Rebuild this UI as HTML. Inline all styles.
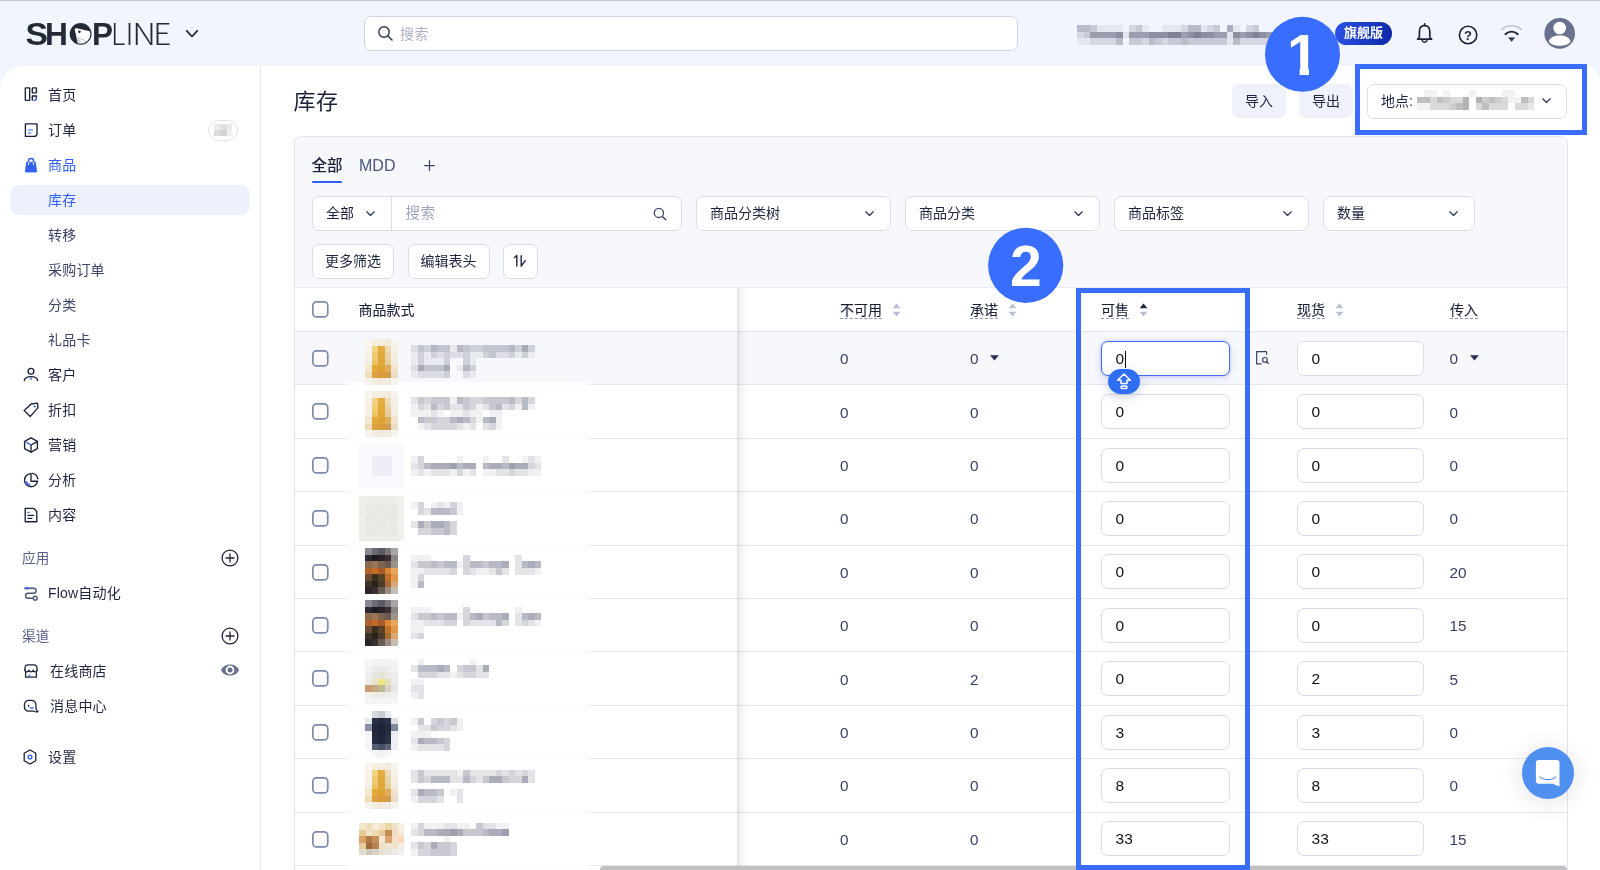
<!DOCTYPE html><html lang="zh-CN"><head><meta charset="utf-8"><title>库存</title><style>
*{box-sizing:border-box;margin:0;padding:0}
html,body{width:1600px;height:870px;overflow:hidden}
body{position:relative;background:#f2f5fe;font-family:"Liberation Sans","Noto Sans CJK SC",sans-serif;font-size:14px;color:#1f2540;-webkit-font-smoothing:antialiased;will-change:transform}
.abs{position:absolute}
#topline{position:absolute;left:0;top:0;width:1600px;height:1px;background:#c6c6ca}
#side{position:absolute;left:0;top:66px;width:261px;height:804px;background:#fff;border-top-left-radius:24px;border-right:1px solid #e4e7f0}
#main{position:absolute;left:261px;top:66px;width:1339px;height:804px;background:#fff;border-top-right-radius:16px}
.nav{position:absolute;left:48px;height:20px;line-height:20px;font-size:14px;color:#1f2540;white-space:nowrap;letter-spacing:0.2px}
.nav.sub{color:#3c4568}
.nav.act{color:#2f5cf5}
.nav.sec{left:22px;color:#56608a;font-size:13.5px}
.ico{position:absolute;left:22px;width:18px;height:18px}
#actbg{position:absolute;left:11px;top:185px;width:238px;height:30px;border-radius:7px;background:#edf1fe}
#card{position:absolute;left:294px;top:136px;width:1274px;height:760px;background:#f7f8fc;border:1px solid #e1e4ef;border-radius:7px}
.sel{position:absolute;height:35px;background:#fff;border:1px solid #d9dcea;border-radius:7px;font-size:14px;line-height:33px;color:#1f2540;white-space:nowrap}
.btn{position:absolute;height:35px;background:#fff;border:1px solid #d9dcea;border-radius:7px;font-size:14px;line-height:32px;color:#1f2540;text-align:center;white-space:nowrap}
.gbtn{position:absolute;height:34px;background:#eff2fb;border-radius:7px;font-size:14px;line-height:34px;color:#1f2540;text-align:center}
.chev{position:absolute;width:10px;height:6px}
#tbl{position:absolute;left:295px;top:288px;width:1272px;height:582px;background:#fff}
.row{position:absolute;left:0;width:1272px;border-top:1px solid #e6e8f1}
.cb{position:absolute;width:18px;height:18px}
.th{position:absolute;font-size:14px;line-height:20px;color:#1a2038;white-space:nowrap;font-weight:400;-webkit-text-stroke:0.1px #1a2038}
.th u{text-decoration:none;border-bottom:1px dashed #9097b6;padding-bottom:0px}
.num{position:absolute;font-size:15.3px;line-height:20px;color:#3a4160;white-space:nowrap}
.inp{position:absolute;height:35px;background:#fff;border:1px solid #d9dcea;border-radius:7px;font-size:15.5px;line-height:34.6px;color:#111;padding-left:13.6px}
.sorta{position:absolute;width:9px;height:14px}
.hl{position:absolute;border:5px solid #386dfe}
.circ{position:absolute;width:75px;height:75px;border-radius:50%;background:#3370ff;color:#fff;font-weight:bold;font-size:50px;line-height:75px;text-align:center}
</style></head><body>
<div id="topline"></div>
<svg class="abs" style="left:0px;top:0px" width="200" height="66" viewBox="0 0 200 66">
<g font-family="Liberation Sans, sans-serif" font-weight="bold" font-size="31.1" fill="#232a36">
<text x="25.5" y="44.9" textLength="22.5" lengthAdjust="spacingAndGlyphs">S</text>
<text x="44.9" y="44.9" textLength="22.9" lengthAdjust="spacingAndGlyphs">H</text>
<text x="92.1" y="44.9" textLength="20.95" lengthAdjust="spacingAndGlyphs">P</text>
</g>
<defs><clipPath id="lc"><circle cx="80.6" cy="33.9" r="9.8"/></clipPath></defs>
<circle cx="80.6" cy="33.9" r="10.9" fill="#232a36"/>
<path d="M74.9 30.2 C74.5 28.7 75.5 27.9 76.8 28.3 L93 32 L93 46 L78.3 46 Z" fill="#fff" clip-path="url(#lc)"/>
<circle cx="79.4" cy="31.7" r="1.25" fill="#232a36"/>
<path d="M77.3 37.4 L85.4 40.7 M77.6 38.5 L82.2 43.3 M77.9 39.7 L79.8 43.8" stroke="#8a9098" stroke-width="0.55" fill="none" clip-path="url(#lc)"/>
<g font-family="Noto Sans CJK SC, Liberation Sans, sans-serif" font-weight="300" font-size="29.4" fill="#232a36">
<text x="110.9" y="44.9" textLength="14.27" lengthAdjust="spacingAndGlyphs">L</text>
<text x="125.6" y="44.9" textLength="8" lengthAdjust="spacingAndGlyphs">I</text>
<text x="132.25" y="44.9" textLength="23.7" lengthAdjust="spacingAndGlyphs">N</text>
<text x="153.3" y="44.9" textLength="18" lengthAdjust="spacingAndGlyphs">E</text>
</g>
</svg>
<svg class="abs" style="left:185.5px;top:29.6px" width="12" height="7.5" viewBox="0 0 12 7.5"><path d="M0.8 0.8 L6.0 6.5 L11.2 0.8" fill="none" stroke="#232a36" stroke-width="1.8" stroke-linecap="round" stroke-linejoin="round"/></svg>
<div class="abs" style="left:364px;top:16px;width:654px;height:35px;background:#fff;border:1px solid #d0d4e6;border-radius:7px"></div>
<svg class="abs" style="left:377px;top:25px" width="17" height="17" viewBox="0 0 17 17"><circle cx="7" cy="7" r="5.2" fill="none" stroke="#2c3142" stroke-width="1.4"/><path d="M11 11 L15 15" stroke="#2c3142" stroke-width="1.5" stroke-linecap="round"/></svg>
<div class="abs" style="left:400px;top:23.6px;font-size:14px;line-height:20px;color:#adb1c6;letter-spacing:0.5px">搜索</div>
<svg class="abs" style="left:1077.2px;top:24.5px" width="196.0" height="20.5" shape-rendering="crispEdges"><rect x="0.0" y="0.0" width="6.7" height="6.7" fill="#b8bbc9"/><rect x="6.5" y="0.0" width="6.7" height="6.7" fill="#b8bbc9"/><rect x="13.0" y="0.0" width="6.7" height="6.7" fill="#c7cad6"/><rect x="19.5" y="0.0" width="6.7" height="6.7" fill="#e4e7f1"/><rect x="26.0" y="0.0" width="6.7" height="6.7" fill="#e4e7f1"/><rect x="32.5" y="0.0" width="6.7" height="6.7" fill="#e4e7f1"/><rect x="39.0" y="0.0" width="6.7" height="6.7" fill="#e4e7f1"/><rect x="52.0" y="0.0" width="6.7" height="6.7" fill="#d5d8e4"/><rect x="58.5" y="0.0" width="6.7" height="6.7" fill="#c7cad6"/><rect x="65.0" y="0.0" width="6.7" height="6.7" fill="#e4e7f1"/><rect x="84.5" y="0.0" width="6.7" height="6.7" fill="#e4e7f1"/><rect x="91.0" y="0.0" width="6.7" height="6.7" fill="#e4e7f1"/><rect x="97.5" y="0.0" width="6.7" height="6.7" fill="#e4e7f1"/><rect x="104.0" y="0.0" width="6.7" height="6.7" fill="#d5d8e4"/><rect x="110.5" y="0.0" width="6.7" height="6.7" fill="#b8bbc9"/><rect x="117.0" y="0.0" width="6.7" height="6.7" fill="#b8bbc9"/><rect x="123.5" y="0.0" width="6.7" height="6.7" fill="#e4e7f1"/><rect x="130.0" y="0.0" width="6.7" height="6.7" fill="#d5d8e4"/><rect x="136.5" y="0.0" width="6.7" height="6.7" fill="#c7cad6"/><rect x="149.5" y="0.0" width="6.7" height="6.7" fill="#aaadbc"/><rect x="156.0" y="0.0" width="6.7" height="6.7" fill="#e4e7f1"/><rect x="169.0" y="0.0" width="6.7" height="6.7" fill="#d5d8e4"/><rect x="175.5" y="0.0" width="6.7" height="6.7" fill="#c7cad6"/><rect x="0.0" y="6.5" width="6.7" height="6.7" fill="#d5d8e4"/><rect x="6.5" y="6.5" width="6.7" height="6.7" fill="#c7cad6"/><rect x="13.0" y="6.5" width="6.7" height="6.7" fill="#9b9eaf"/><rect x="19.5" y="6.5" width="6.7" height="6.7" fill="#9b9eaf"/><rect x="26.0" y="6.5" width="6.7" height="6.7" fill="#9b9eaf"/><rect x="32.5" y="6.5" width="6.7" height="6.7" fill="#9b9eaf"/><rect x="39.0" y="6.5" width="6.7" height="6.7" fill="#8d90a1"/><rect x="45.5" y="6.5" width="6.7" height="6.7" fill="#e4e7f1"/><rect x="52.0" y="6.5" width="6.7" height="6.7" fill="#9b9eaf"/><rect x="58.5" y="6.5" width="6.7" height="6.7" fill="#9b9eaf"/><rect x="65.0" y="6.5" width="6.7" height="6.7" fill="#9b9eaf"/><rect x="71.5" y="6.5" width="6.7" height="6.7" fill="#8d90a1"/><rect x="78.0" y="6.5" width="6.7" height="6.7" fill="#8d90a1"/><rect x="84.5" y="6.5" width="6.7" height="6.7" fill="#8d90a1"/><rect x="91.0" y="6.5" width="6.7" height="6.7" fill="#7e8194"/><rect x="97.5" y="6.5" width="6.7" height="6.7" fill="#7e8194"/><rect x="104.0" y="6.5" width="6.7" height="6.7" fill="#9b9eaf"/><rect x="110.5" y="6.5" width="6.7" height="6.7" fill="#8d90a1"/><rect x="117.0" y="6.5" width="6.7" height="6.7" fill="#7e8194"/><rect x="123.5" y="6.5" width="6.7" height="6.7" fill="#8d90a1"/><rect x="130.0" y="6.5" width="6.7" height="6.7" fill="#8d90a1"/><rect x="136.5" y="6.5" width="6.7" height="6.7" fill="#9b9eaf"/><rect x="143.0" y="6.5" width="6.7" height="6.7" fill="#9b9eaf"/><rect x="149.5" y="6.5" width="6.7" height="6.7" fill="#e4e7f1"/><rect x="156.0" y="6.5" width="6.7" height="6.7" fill="#8d90a1"/><rect x="162.5" y="6.5" width="6.7" height="6.7" fill="#9b9eaf"/><rect x="169.0" y="6.5" width="6.7" height="6.7" fill="#8d90a1"/><rect x="175.5" y="6.5" width="6.7" height="6.7" fill="#7e8194"/><rect x="182.0" y="6.5" width="6.7" height="6.7" fill="#8d90a1"/><rect x="188.5" y="6.5" width="6.7" height="6.7" fill="#9b9eaf"/><rect x="0.0" y="13.0" width="6.7" height="6.7" fill="#e4e7f1"/><rect x="6.5" y="13.0" width="6.7" height="6.7" fill="#e4e7f1"/><rect x="13.0" y="13.0" width="6.7" height="6.7" fill="#d5d8e4"/><rect x="19.5" y="13.0" width="6.7" height="6.7" fill="#d5d8e4"/><rect x="26.0" y="13.0" width="6.7" height="6.7" fill="#d5d8e4"/><rect x="32.5" y="13.0" width="6.7" height="6.7" fill="#d5d8e4"/><rect x="39.0" y="13.0" width="6.7" height="6.7" fill="#b8bbc9"/><rect x="52.0" y="13.0" width="6.7" height="6.7" fill="#c7cad6"/><rect x="58.5" y="13.0" width="6.7" height="6.7" fill="#c7cad6"/><rect x="65.0" y="13.0" width="6.7" height="6.7" fill="#d5d8e4"/><rect x="71.5" y="13.0" width="6.7" height="6.7" fill="#b8bbc9"/><rect x="78.0" y="13.0" width="6.7" height="6.7" fill="#c7cad6"/><rect x="84.5" y="13.0" width="6.7" height="6.7" fill="#d5d8e4"/><rect x="91.0" y="13.0" width="6.7" height="6.7" fill="#c7cad6"/><rect x="97.5" y="13.0" width="6.7" height="6.7" fill="#c7cad6"/><rect x="104.0" y="13.0" width="6.7" height="6.7" fill="#b8bbc9"/><rect x="110.5" y="13.0" width="6.7" height="6.7" fill="#c7cad6"/><rect x="117.0" y="13.0" width="6.7" height="6.7" fill="#c7cad6"/><rect x="123.5" y="13.0" width="6.7" height="6.7" fill="#c7cad6"/><rect x="130.0" y="13.0" width="6.7" height="6.7" fill="#c7cad6"/><rect x="136.5" y="13.0" width="6.7" height="6.7" fill="#c7cad6"/><rect x="143.0" y="13.0" width="6.7" height="6.7" fill="#c7cad6"/><rect x="149.5" y="13.0" width="6.7" height="6.7" fill="#e4e7f1"/><rect x="156.0" y="13.0" width="6.7" height="6.7" fill="#b8bbc9"/><rect x="162.5" y="13.0" width="6.7" height="6.7" fill="#d5d8e4"/><rect x="169.0" y="13.0" width="6.7" height="6.7" fill="#d5d8e4"/><rect x="175.5" y="13.0" width="6.7" height="6.7" fill="#d5d8e4"/><rect x="182.0" y="13.0" width="6.7" height="6.7" fill="#d5d8e4"/><rect x="188.5" y="13.0" width="6.7" height="6.7" fill="#d5d8e4"/></svg>
<div class="abs" style="left:1335px;top:22px;width:57px;height:23px;border-radius:12px;background:linear-gradient(90deg,#2b50e6,#0d2aa6);color:#fff;font-weight:bold;font-size:13px;line-height:22px;text-align:center;letter-spacing:0px">旗舰版</div>
<svg class="abs" style="left:1414px;top:22px" width="22" height="24" viewBox="0 0 22 24"><path d="M10.6 3.6 C6.8 3.6 5.4 6.6 5.4 9.4 L5.4 14.6 C5.4 16 4.6 16.6 3.6 17.2 L17.6 17.2 C16.6 16.6 15.8 16 15.8 14.6 L15.8 9.4 C15.8 6.6 14.4 3.6 10.6 3.6 Z" fill="none" stroke="#1c2236" stroke-width="1.7" stroke-linejoin="round"/><path d="M8.2 18.4 C8.8 20.8 12.4 20.8 13 18.4" fill="none" stroke="#1c2236" stroke-width="1.5" stroke-linecap="round"/><path d="M10.6 2 L10.6 3.4" stroke="#1c2236" stroke-width="1.8" stroke-linecap="round"/></svg>
<svg class="abs" style="left:1457px;top:24px" width="23" height="23" viewBox="0 0 23 23"><circle cx="11.1" cy="11" r="8.7" fill="none" stroke="#1c2236" stroke-width="1.6"/><text x="11.1" y="15.6" font-family="Liberation Sans, sans-serif" font-size="13" font-weight="bold" text-anchor="middle" fill="#1c2236">?</text></svg>
<svg class="abs" style="left:1500px;top:24px" width="24" height="20" viewBox="0 0 24 20"><path d="M1.8 5.4 C7.5 0.6 15.7 0.6 21.4 5.4" fill="none" stroke="#bcc3d2" stroke-width="1.5" stroke-linecap="round"/><path d="M5.4 10.2 C9 6.8 14.2 6.8 17.8 10.2" fill="none" stroke="#1c2236" stroke-width="1.9" stroke-linecap="round"/><path d="M8.6 13.7 L14.6 13.7 L11.6 17.4 Z" fill="#343c56" stroke="#343c56" stroke-width="0.6" stroke-linejoin="round"/></svg>
<svg class="abs" style="left:1543px;top:17px" width="34" height="34" viewBox="0 0 34 34"><defs><clipPath id="avc"><circle cx="16.7" cy="16.4" r="15.3"/></clipPath></defs><circle cx="16.7" cy="16.4" r="15.3" fill="#67728f"/><circle cx="16.7" cy="11" r="6.3" fill="#fff"/><path d="M5.8 24.4 C7.6 16.6 25.8 16.6 27.6 24.4 C24 30.2 9.4 30.2 5.8 24.4 Z" fill="#fff" clip-path="url(#avc)"/></svg>
<div id="side"></div>
<div id="actbg"></div>
<div class="nav " style="top:85px">首页</div>
<div class="nav " style="top:120px">订单</div>
<div class="nav act" style="top:155px">商品</div>
<div class="nav act" style="top:190px">库存</div>
<div class="nav sub" style="top:225px">转移</div>
<div class="nav sub" style="top:260px">采购订单</div>
<div class="nav sub" style="top:295px">分类</div>
<div class="nav sub" style="top:330px">礼品卡</div>
<div class="nav " style="top:365px">客户</div>
<div class="nav " style="top:400px">折扣</div>
<div class="nav " style="top:434.5px">营销</div>
<div class="nav " style="top:469.5px">分析</div>
<div class="nav " style="top:504.5px">内容</div>
<div class="nav " style="top:583px">Flow自动化</div>
<div class="nav " style="top:747px">设置</div>
<div class="nav" style="top:661px;left:50px">在线商店</div>
<div class="nav" style="top:696px;left:50px">消息中心</div>
<div class="nav sec" style="top:548.8px">应用</div>
<div class="nav sec" style="top:626.8px">渠道</div>
<svg class="abs" style="left:21.5px;top:85.4px" width="18" height="18" viewBox="0 0 18 18" fill="none" stroke="#1c2236" stroke-width="1.35" stroke-linecap="round" stroke-linejoin="round"><rect x="3.3" y="2.9" width="4.4" height="12.4" rx="0.4" stroke-width="1.35"/><rect x="10.3" y="2.9" width="4.1" height="5" rx="0.4" stroke-width="1.35"/><path d="M10.3 15.3 V11 H14.4 V12.6" stroke-width="1.35"/><path d="M14.4 13 C14.4 14.6 13.4 15.3 12.2 15.5" stroke="#3360f0" stroke-width="1.4"/></svg>
<svg class="abs" style="left:21.5px;top:121.0px" width="18" height="18" viewBox="0 0 18 18" fill="none" stroke="#1c2236" stroke-width="1.35" stroke-linecap="round" stroke-linejoin="round"><path d="M3.4 2.8 H15 V12.2 C15 14.2 14 15.4 12 15.4 H3.4 Z" stroke-width="1.35"/><path d="M6.4 9 H10.6 M6.4 12 H8.6" stroke="#3360f0" stroke-width="1.2"/></svg>
<svg class="abs" style="left:21.5px;top:156px" width="18" height="18" viewBox="0 0 18 18"><path d="M4.6 6.2 H13.4 L14.7 16 H3.3 Z" fill="#3360f0" stroke="#3360f0" stroke-width="0.8" stroke-linejoin="round"/><path d="M6.4 8.2 V5 C6.4 1.6 11.6 1.6 11.6 5 V8.2" fill="none" stroke="#3360f0" stroke-width="1.5" stroke-linecap="round"/><path d="M6.6 8.6 V6.6 M11.4 8.6 V6.6" stroke="#fff" stroke-width="1" stroke-linecap="round"/></svg>
<svg class="abs" style="left:21.5px;top:366.0px" width="18" height="18" viewBox="0 0 18 18" fill="none" stroke="#1c2236" stroke-width="1.35" stroke-linecap="round" stroke-linejoin="round"><circle cx="9" cy="5.2" r="2.9"/><path d="M2.3 14.6 C3 9.2 15 9.2 15.7 14.6"/><path d="M9 12 V13.4" stroke="#3360f0" stroke-width="1.3"/></svg>
<svg class="abs" style="left:21.5px;top:401.0px" width="18" height="18" viewBox="0 0 18 18" fill="none" stroke="#1c2236" stroke-width="1.35" stroke-linecap="round" stroke-linejoin="round"><path d="M2.2 9.6 L9.2 3 L15.4 2.2 L16 6.6 L8.2 15.6 Z" stroke-width="1.35"/><circle cx="12.6" cy="5.4" r="0.7" fill="#3360f0" stroke="#3360f0" stroke-width="0.6"/></svg>
<svg class="abs" style="left:21.5px;top:435.5px" width="18" height="18" viewBox="0 0 18 18" fill="none" stroke="#1c2236" stroke-width="1.35" stroke-linecap="round" stroke-linejoin="round"><path d="M9 1.8 L15.4 5.4 V12.6 L9 16.2 L2.6 12.6 V5.4 Z"/><path d="M9 9 V16 M9 9 L15.2 5.6"/><path d="M9 9 L4.6 6.4" stroke="#3360f0" stroke-width="1.4"/></svg>
<svg class="abs" style="left:21.5px;top:470.5px" width="18" height="18" viewBox="0 0 18 18" fill="none" stroke="#1c2236" stroke-width="1.35" stroke-linecap="round" stroke-linejoin="round"><path d="M8 2.6 A6.6 6.6 0 1 0 15.6 10.2 H9 V2.4"/><path d="M10.4 2.3 A6.6 6.6 0 0 1 15.8 7.8" /><path d="M4.6 10.8 C5 12.6 6.4 13.6 8 13.8" stroke="#3360f0" stroke-width="1.4"/></svg>
<svg class="abs" style="left:21.5px;top:505.5px" width="18" height="18" viewBox="0 0 18 18" fill="none" stroke="#1c2236" stroke-width="1.35" stroke-linecap="round" stroke-linejoin="round"><path d="M3.2 2.3 H11.6 L14.8 5.4 V15.7 H3.2 Z"/><path d="M6 9.4 H11.6 M6 12.4 H9.8" stroke-width="1.3"/><path d="M6 6.4 H7" stroke="#3360f0" stroke-width="1.4"/></svg>
<svg class="abs" style="left:21.5px;top:584px" width="18" height="18" viewBox="0 0 18 18" fill="none" stroke="#4a5478" stroke-width="1.4" stroke-linecap="round"><path d="M2.6 4.2 H11.6 A2.5 2.5 0 0 1 11.6 9.2 H6 A2.5 2.5 0 0 0 6 14.2 H10.4"/><circle cx="13.2" cy="14.2" r="1.9"/><circle cx="5" cy="4.2" r="1" fill="#fff" stroke="#3360f0" stroke-width="1.1"/></svg>
<svg class="abs" style="left:21.5px;top:662px" width="18" height="18" viewBox="0 0 18 18" fill="none" stroke="#1c2236" stroke-width="1.3" stroke-linecap="round" stroke-linejoin="round"><path d="M3 8.4 V6.2 C3 4 4 2.8 6 2.8 H12 C14 2.8 15 4 15 6.2 V8.4"/><path d="M3.6 9.6 V15.2 H14.4 V9.6"/><path d="M2.8 8 C3 10.4 6.6 10.4 6.9 8.2 C7.2 10.4 10.8 10.4 11.1 8.2 C11.4 10.4 15 10.4 15.2 8"/><path d="M7.4 15 V13.2" stroke="#3360f0" stroke-width="1.3"/></svg>
<svg class="abs" style="left:21.5px;top:697px" width="18" height="18" viewBox="0 0 18 18" fill="none" stroke="#1c2236" stroke-width="1.3" stroke-linecap="round" stroke-linejoin="round"><path d="M11.8 14.2 H6.4 C3.8 14.2 2.4 12.2 2.4 9.6 V8.4 C2.4 5.4 4.2 3.4 7.2 3.4 H9.2 C12.2 3.4 14 5.4 14 8.4 V11.2 C14 12.6 14.8 13.8 16 14.6 C14.4 15 12.8 14.8 11.8 14.2 Z"/><circle cx="6.4" cy="8.8" r="0.5" fill="#1c2236" stroke-width="0.9"/><path d="M8.6 10.6 C9.2 11.4 10.4 11.4 11 10.6" stroke="#3360f0" stroke-width="1.3"/></svg>
<svg class="abs" style="left:21px;top:747.5px" width="18" height="18" viewBox="0 0 18 18" fill="none" stroke="#1c2236" stroke-width="1.3" stroke-linejoin="round"><path d="M9 2 L14.8 5.3 V12.7 L9 16 L3.2 12.7 V5.3 Z"/><circle cx="9" cy="9" r="1.9" stroke="#3360f0" stroke-width="1.35"/></svg>
<div class="abs" style="left:208px;top:119.5px;width:30px;height:21px;border:1px solid #dfe2ee;border-radius:11px;background:#fff"></div>
<svg class="abs" style="left:213.5px;top:123.5px" width="18.9" height="12.6" shape-rendering="crispEdges"><rect x="0.0" y="0.0" width="6.6" height="6.6" fill="#ececee"/><rect x="6.3" y="0.0" width="6.6" height="6.6" fill="#e0e0e3"/><rect x="12.6" y="0.0" width="6.6" height="6.6" fill="#eaeaec"/><rect x="0.0" y="6.3" width="6.6" height="6.6" fill="#dcdcdf"/><rect x="6.3" y="6.3" width="6.6" height="6.6" fill="#d4d4d8"/><rect x="12.6" y="6.3" width="6.6" height="6.6" fill="#f1f1f3"/></svg>
<svg class="abs" style="left:219.5px;top:547.5px" width="20" height="20" viewBox="0 0 20 20" fill="none" stroke="#1c2236" stroke-width="1.3" stroke-linecap="round"><circle cx="10" cy="10" r="7.9"/><path d="M10 6 V14 M6 10 H14"/></svg>
<svg class="abs" style="left:219.5px;top:626px" width="20" height="20" viewBox="0 0 20 20" fill="none" stroke="#1c2236" stroke-width="1.3" stroke-linecap="round"><circle cx="10" cy="10" r="7.9"/><path d="M10 6 V14 M6 10 H14"/></svg>
<svg class="abs" style="left:219.5px;top:660.3px" width="20" height="20" viewBox="0 0 20 20"><path d="M1 10 C4 2.6 16 2.6 19 10 C16 17.4 4 17.4 1 10 Z" fill="#68718f"/><circle cx="10" cy="10" r="4.4" fill="#fff"/><circle cx="10" cy="10" r="2.5" fill="#68718f"/></svg>
<div id="main"></div>
<div class="abs" style="left:293.5px;top:87.2px;font-size:22px;line-height:30px;color:#1a2038;letter-spacing:0.6px">库存</div>
<div class="gbtn" style="left:1232px;top:84px;width:54px">导入</div>
<div class="gbtn" style="left:1299px;top:84px;width:54px">导出</div>
<div class="sel" style="left:1367px;top:84px;width:200px;padding-left:13px">地点:</div>
<svg class="abs" style="left:1417px;top:90.2px" width="118.0" height="20.5" shape-rendering="crispEdges"><rect x="6.5" y="0.0" width="6.7" height="6.7" fill="#f2f2f3"/><rect x="13.0" y="0.0" width="6.7" height="6.7" fill="#f2f2f3"/><rect x="26.0" y="0.0" width="6.7" height="6.7" fill="#f2f2f3"/><rect x="52.0" y="0.0" width="6.7" height="6.7" fill="#f2f2f3"/><rect x="84.5" y="0.0" width="6.7" height="6.7" fill="#f2f2f3"/><rect x="91.0" y="0.0" width="6.7" height="6.7" fill="#f2f2f3"/><rect x="0.0" y="6.5" width="6.7" height="6.7" fill="#bfbfc2"/><rect x="6.5" y="6.5" width="6.7" height="6.7" fill="#bfbfc2"/><rect x="13.0" y="6.5" width="6.7" height="6.7" fill="#d9d9db"/><rect x="19.5" y="6.5" width="6.7" height="6.7" fill="#bfbfc2"/><rect x="26.0" y="6.5" width="6.7" height="6.7" fill="#cccccf"/><rect x="32.5" y="6.5" width="6.7" height="6.7" fill="#d9d9db"/><rect x="39.0" y="6.5" width="6.7" height="6.7" fill="#d9d9db"/><rect x="45.5" y="6.5" width="6.7" height="6.7" fill="#b2b2b6"/><rect x="58.5" y="6.5" width="6.7" height="6.7" fill="#b2b2b6"/><rect x="65.0" y="6.5" width="6.7" height="6.7" fill="#cccccf"/><rect x="71.5" y="6.5" width="6.7" height="6.7" fill="#bfbfc2"/><rect x="78.0" y="6.5" width="6.7" height="6.7" fill="#cccccf"/><rect x="84.5" y="6.5" width="6.7" height="6.7" fill="#d9d9db"/><rect x="91.0" y="6.5" width="6.7" height="6.7" fill="#f2f2f3"/><rect x="97.5" y="6.5" width="6.7" height="6.7" fill="#f2f2f3"/><rect x="104.0" y="6.5" width="6.7" height="6.7" fill="#bfbfc2"/><rect x="110.5" y="6.5" width="6.7" height="6.7" fill="#d9d9db"/><rect x="0.0" y="13.0" width="6.7" height="6.7" fill="#f2f2f3"/><rect x="6.5" y="13.0" width="6.7" height="6.7" fill="#f2f2f3"/><rect x="13.0" y="13.0" width="6.7" height="6.7" fill="#d9d9db"/><rect x="19.5" y="13.0" width="6.7" height="6.7" fill="#d9d9db"/><rect x="26.0" y="13.0" width="6.7" height="6.7" fill="#d9d9db"/><rect x="32.5" y="13.0" width="6.7" height="6.7" fill="#cccccf"/><rect x="39.0" y="13.0" width="6.7" height="6.7" fill="#bfbfc2"/><rect x="45.5" y="13.0" width="6.7" height="6.7" fill="#b2b2b6"/><rect x="58.5" y="13.0" width="6.7" height="6.7" fill="#d9d9db"/><rect x="65.0" y="13.0" width="6.7" height="6.7" fill="#bfbfc2"/><rect x="71.5" y="13.0" width="6.7" height="6.7" fill="#d9d9db"/><rect x="78.0" y="13.0" width="6.7" height="6.7" fill="#d9d9db"/><rect x="84.5" y="13.0" width="6.7" height="6.7" fill="#d9d9db"/><rect x="97.5" y="13.0" width="6.7" height="6.7" fill="#d9d9db"/><rect x="104.0" y="13.0" width="6.7" height="6.7" fill="#d9d9db"/><rect x="110.5" y="13.0" width="6.7" height="6.7" fill="#e5e5e7"/></svg>
<svg class="abs" style="left:1542px;top:98px" width="9" height="5.5" viewBox="0 0 9 5.5"><path d="M0.8 0.8 L4.5 4.5 L8.2 0.8" fill="none" stroke="#30385a" stroke-width="1.25" stroke-linecap="round" stroke-linejoin="round"/></svg>
<div id="card"></div>
<div class="abs" style="left:311.5px;top:156.3px;font-size:15.6px;line-height:20px;color:#1a2038;font-weight:500">全部</div>
<div class="abs" style="left:311.5px;top:180.5px;width:30px;height:2px;background:#2f5cf5;border-radius:1px"></div>
<div class="abs" style="left:359px;top:156px;font-size:16px;line-height:20px;color:#4a5580">MDD</div>
<svg class="abs" style="left:423px;top:159px" width="13" height="13" viewBox="0 0 13 13"><path d="M6.5 1.6 V11.4 M1.6 6.5 H11.4" stroke="#3a4366" stroke-width="1.25" stroke-linecap="round"/></svg>
<div class="sel" style="left:312px;top:196px;width:370px"></div>
<div class="abs" style="left:391px;top:197px;width:1px;height:33px;background:#d9dcea"></div>
<div class="abs" style="left:326px;top:203px;line-height:20px;font-size:14px;color:#1f2540">全部</div>
<svg class="abs" style="left:365.5px;top:210.5px" width="9" height="5.5" viewBox="0 0 9 5.5"><path d="M0.8 0.8 L4.5 4.5 L8.2 0.8" fill="none" stroke="#30385a" stroke-width="1.25" stroke-linecap="round" stroke-linejoin="round"/></svg>
<div class="abs" style="left:405.5px;top:203px;line-height:20px;font-size:14.5px;color:#a0a6c0;letter-spacing:0.5px">搜索</div>
<svg class="abs" style="left:653px;top:206.5px" width="14" height="14" viewBox="0 0 14 14"><circle cx="5.9" cy="5.9" r="4.6" fill="none" stroke="#3a4060" stroke-width="1.3"/><path d="M9.4 9.4 L12.8 12.8" stroke="#3a4060" stroke-width="1.4000000000000001" stroke-linecap="round"/></svg>
<div class="sel" style="left:696px;top:196px;width:195px;padding-left:13px">商品分类树</div>
<svg class="abs" style="left:865px;top:210.5px" width="9" height="5.5" viewBox="0 0 9 5.5"><path d="M0.8 0.8 L4.5 4.5 L8.2 0.8" fill="none" stroke="#30385a" stroke-width="1.25" stroke-linecap="round" stroke-linejoin="round"/></svg>
<div class="sel" style="left:905px;top:196px;width:195px;padding-left:13px">商品分类</div>
<svg class="abs" style="left:1074px;top:210.5px" width="9" height="5.5" viewBox="0 0 9 5.5"><path d="M0.8 0.8 L4.5 4.5 L8.2 0.8" fill="none" stroke="#30385a" stroke-width="1.25" stroke-linecap="round" stroke-linejoin="round"/></svg>
<div class="sel" style="left:1114px;top:196px;width:195px;padding-left:13px">商品标签</div>
<svg class="abs" style="left:1283px;top:210.5px" width="9" height="5.5" viewBox="0 0 9 5.5"><path d="M0.8 0.8 L4.5 4.5 L8.2 0.8" fill="none" stroke="#30385a" stroke-width="1.25" stroke-linecap="round" stroke-linejoin="round"/></svg>
<div class="sel" style="left:1323px;top:196px;width:152px;padding-left:13px">数量</div>
<svg class="abs" style="left:1449px;top:210.5px" width="9" height="5.5" viewBox="0 0 9 5.5"><path d="M0.8 0.8 L4.5 4.5 L8.2 0.8" fill="none" stroke="#30385a" stroke-width="1.25" stroke-linecap="round" stroke-linejoin="round"/></svg>
<div class="btn" style="left:312px;top:244px;width:82px">更多筛选</div>
<div class="btn" style="left:407.5px;top:244px;width:82px">编辑表头</div>
<div class="btn" style="left:503px;top:244px;width:35px"></div>
<svg class="abs" style="left:512px;top:253px" width="16" height="16" viewBox="0 0 16 16" fill="none" stroke="#1f2540" stroke-width="1.4" stroke-linecap="round" stroke-linejoin="round"><path d="M2.4 4.6 L4.8 2.4 V13"/><path d="M9.2 2.6 V13.2 L13.2 7.6"/></svg>
<div id="tbl"></div>
<div class="abs" style="left:295px;top:287px;width:1272px;height:1px;background:#e8eaf2"></div>
<svg class="cb" style="left:312px;top:301.2px" viewBox="0 0 18 18"><rect x="0.85" y="0.85" width="14.9" height="15.1" rx="3.7" fill="#fff" stroke="#8088ad" stroke-width="1.7"/></svg>
<div class="th" style="left:358.5px;top:300px">商品款式</div>
<div class="th" style="left:840px;top:300px"><u>不可用</u></div><svg class="abs" style="left:891.5px;top:302.5px" width="9" height="14" viewBox="0 0 9 14"><path d="M4.5 0.6 L8.4 5.2 H0.6 Z" fill="#b9bed3"/><path d="M4.5 13.4 L8.4 8.8 H0.6 Z" fill="#b9bed3"/></svg>
<div class="th" style="left:970px;top:300px"><u>承诺</u></div><svg class="abs" style="left:1007.5px;top:302.5px" width="9" height="14" viewBox="0 0 9 14"><path d="M4.5 0.6 L8.4 5.2 H0.6 Z" fill="#b9bed3"/><path d="M4.5 13.4 L8.4 8.8 H0.6 Z" fill="#b9bed3"/></svg>
<div class="th" style="left:1101px;top:300px"><u>可售</u></div><svg class="abs" style="left:1139px;top:302.5px" width="9" height="14" viewBox="0 0 9 14"><path d="M4.5 0.6 L8.4 5.2 H0.6 Z" fill="#1f2540"/><path d="M4.5 13.4 L8.4 8.8 H0.6 Z" fill="#b9bed3"/></svg>
<div class="th" style="left:1297px;top:300px"><u>现货</u></div><svg class="abs" style="left:1335px;top:302.5px" width="9" height="14" viewBox="0 0 9 14"><path d="M4.5 0.6 L8.4 5.2 H0.6 Z" fill="#b9bed3"/><path d="M4.5 13.4 L8.4 8.8 H0.6 Z" fill="#b9bed3"/></svg>
<div class="th" style="left:1450px;top:300px"><u>传入</u></div>
<div class="abs" style="left:295px;top:331.0px;width:1272px;height:53.4px;border-top:1px solid #e6e8f1;background:#f7f8fc"></div>
<div class="abs" style="left:295px;top:384.4px;width:1272px;height:53.4px;border-top:1px solid #e6e8f1;background:transparent"></div>
<div class="abs" style="left:295px;top:437.8px;width:1272px;height:53.4px;border-top:1px solid #e6e8f1;background:transparent"></div>
<div class="abs" style="left:295px;top:491.2px;width:1272px;height:53.4px;border-top:1px solid #e6e8f1;background:transparent"></div>
<div class="abs" style="left:295px;top:544.6px;width:1272px;height:53.4px;border-top:1px solid #e6e8f1;background:transparent"></div>
<div class="abs" style="left:295px;top:598.0px;width:1272px;height:53.4px;border-top:1px solid #e6e8f1;background:transparent"></div>
<div class="abs" style="left:295px;top:651.4px;width:1272px;height:53.4px;border-top:1px solid #e6e8f1;background:transparent"></div>
<div class="abs" style="left:295px;top:704.8px;width:1272px;height:53.4px;border-top:1px solid #e6e8f1;background:transparent"></div>
<div class="abs" style="left:295px;top:758.2px;width:1272px;height:53.4px;border-top:1px solid #e6e8f1;background:transparent"></div>
<div class="abs" style="left:295px;top:811.6px;width:1272px;height:53.4px;border-top:1px solid #e6e8f1;background:transparent"></div>
<div class="abs" style="left:295px;top:865.0px;width:1272px;height:53.4px;border-top:1px solid #e6e8f1;background:transparent"></div>
<div class="abs" style="left:345.5px;top:381.9px;width:244px;height:6.5px;background:rgba(255,255,255,0.8)"></div>
<div class="abs" style="left:345.5px;top:435.3px;width:244px;height:6.5px;background:rgba(255,255,255,0.8)"></div>
<div class="abs" style="left:345.5px;top:488.7px;width:244px;height:6.5px;background:rgba(255,255,255,0.8)"></div>
<div class="abs" style="left:345.5px;top:542.1px;width:244px;height:6.5px;background:rgba(255,255,255,0.8)"></div>
<div class="abs" style="left:345.5px;top:595.5px;width:244px;height:6.5px;background:rgba(255,255,255,0.8)"></div>
<div class="abs" style="left:345.5px;top:648.9px;width:244px;height:6.5px;background:rgba(255,255,255,0.8)"></div>
<div class="abs" style="left:345.5px;top:702.3px;width:244px;height:6.5px;background:rgba(255,255,255,0.8)"></div>
<div class="abs" style="left:345.5px;top:755.7px;width:244px;height:6.5px;background:rgba(255,255,255,0.8)"></div>
<div class="abs" style="left:345.5px;top:809.1px;width:244px;height:6.5px;background:rgba(255,255,255,0.8)"></div>
<div class="abs" style="left:345.5px;top:862.5px;width:244px;height:6.5px;background:rgba(255,255,255,0.8)"></div>
<svg class="cb" style="left:312px;top:349.9px" viewBox="0 0 18 18"><rect x="0.85" y="0.85" width="14.9" height="15.1" rx="3.7" fill="#fff" stroke="#8088ad" stroke-width="1.7"/></svg>
<svg class="abs" style="left:365px;top:339.0px" width="32.5" height="45.5" shape-rendering="crispEdges"><rect x="0.0" y="0.0" width="6.8" height="6.8" fill="#f8f4ee"/><rect x="6.5" y="0.0" width="6.8" height="6.8" fill="#f6eedd"/><rect x="13.0" y="0.0" width="6.8" height="6.8" fill="#f5efe3"/><rect x="19.5" y="0.0" width="6.8" height="6.8" fill="#f3ecdc"/><rect x="26.0" y="0.0" width="6.8" height="6.8" fill="#f7f3ee"/><rect x="0.0" y="6.5" width="6.8" height="6.8" fill="#f7f2ea"/><rect x="6.5" y="6.5" width="6.8" height="6.8" fill="#f1d383"/><rect x="13.0" y="6.5" width="6.8" height="6.8" fill="#e3ab40"/><rect x="19.5" y="6.5" width="6.8" height="6.8" fill="#ecdcb8"/><rect x="26.0" y="6.5" width="6.8" height="6.8" fill="#f5f0e8"/><rect x="0.0" y="13.0" width="6.8" height="6.8" fill="#f6f0e6"/><rect x="6.5" y="13.0" width="6.8" height="6.8" fill="#efcb70"/><rect x="13.0" y="13.0" width="6.8" height="6.8" fill="#e2a93c"/><rect x="19.5" y="13.0" width="6.8" height="6.8" fill="#e8d4a8"/><rect x="26.0" y="13.0" width="6.8" height="6.8" fill="#f4eee4"/><rect x="0.0" y="19.5" width="6.8" height="6.8" fill="#f5eee2"/><rect x="6.5" y="19.5" width="6.8" height="6.8" fill="#ecc468"/><rect x="13.0" y="19.5" width="6.8" height="6.8" fill="#e1a638"/><rect x="19.5" y="19.5" width="6.8" height="6.8" fill="#e6cc98"/><rect x="26.0" y="19.5" width="6.8" height="6.8" fill="#f3ece0"/><rect x="0.0" y="26.0" width="6.8" height="6.8" fill="#f3e8d0"/><rect x="6.5" y="26.0" width="6.8" height="6.8" fill="#e3a83a"/><rect x="13.0" y="26.0" width="6.8" height="6.8" fill="#dfa234"/><rect x="19.5" y="26.0" width="6.8" height="6.8" fill="#dcae5c"/><rect x="26.0" y="26.0" width="6.8" height="6.8" fill="#efe4d0"/><rect x="0.0" y="32.5" width="6.8" height="6.8" fill="#eddcb8"/><rect x="6.5" y="32.5" width="6.8" height="6.8" fill="#dba040"/><rect x="13.0" y="32.5" width="6.8" height="6.8" fill="#d89c3c"/><rect x="19.5" y="32.5" width="6.8" height="6.8" fill="#d29c4c"/><rect x="26.0" y="32.5" width="6.8" height="6.8" fill="#e9dcc6"/><rect x="0.0" y="39.0" width="6.8" height="6.8" fill="#f6f2ec"/><rect x="6.5" y="39.0" width="6.8" height="6.8" fill="#f3ece0"/><rect x="13.0" y="39.0" width="6.8" height="6.8" fill="#f2eadc"/><rect x="19.5" y="39.0" width="6.8" height="6.8" fill="#f2ebe0"/><rect x="26.0" y="39.0" width="6.8" height="6.8" fill="#f6f3ee"/></svg>
<svg class="abs" style="left:410.5px;top:331.0px" width="124.5" height="47.7" shape-rendering="crispEdges"><rect x="0.0" y="14.2" width="6.7" height="6.7" fill="#dddee5"/><rect x="6.5" y="14.2" width="6.7" height="6.7" fill="#c2c4cf"/><rect x="13.0" y="14.2" width="6.7" height="6.7" fill="#cfd1da"/><rect x="19.5" y="14.2" width="6.7" height="6.7" fill="#b5b7c3"/><rect x="26.0" y="14.2" width="6.7" height="6.7" fill="#c2c4cf"/><rect x="32.5" y="14.2" width="6.7" height="6.7" fill="#c2c4cf"/><rect x="39.0" y="14.2" width="6.7" height="6.7" fill="#eaebf1"/><rect x="45.5" y="14.2" width="6.7" height="6.7" fill="#b5b7c3"/><rect x="52.0" y="14.2" width="6.7" height="6.7" fill="#c2c4cf"/><rect x="58.5" y="14.2" width="6.7" height="6.7" fill="#cfd1da"/><rect x="65.0" y="14.2" width="6.7" height="6.7" fill="#cfd1da"/><rect x="71.5" y="14.2" width="6.7" height="6.7" fill="#c2c4cf"/><rect x="78.0" y="14.2" width="6.7" height="6.7" fill="#c2c4cf"/><rect x="84.5" y="14.2" width="6.7" height="6.7" fill="#c2c4cf"/><rect x="91.0" y="14.2" width="6.7" height="6.7" fill="#c2c4cf"/><rect x="97.5" y="14.2" width="6.7" height="6.7" fill="#b5b7c3"/><rect x="104.0" y="14.2" width="6.7" height="6.7" fill="#cfd1da"/><rect x="110.5" y="14.2" width="6.7" height="6.7" fill="#a8aab8"/><rect x="117.0" y="14.2" width="6.7" height="6.7" fill="#cfd1da"/><rect x="0.0" y="20.7" width="6.7" height="6.7" fill="#eaebf1"/><rect x="6.5" y="20.7" width="6.7" height="6.7" fill="#cfd1da"/><rect x="13.0" y="20.7" width="6.7" height="6.7" fill="#eaebf1"/><rect x="19.5" y="20.7" width="6.7" height="6.7" fill="#cfd1da"/><rect x="26.0" y="20.7" width="6.7" height="6.7" fill="#dddee5"/><rect x="32.5" y="20.7" width="6.7" height="6.7" fill="#cfd1da"/><rect x="39.0" y="20.7" width="6.7" height="6.7" fill="#dddee5"/><rect x="45.5" y="20.7" width="6.7" height="6.7" fill="#dddee5"/><rect x="52.0" y="20.7" width="6.7" height="6.7" fill="#cfd1da"/><rect x="58.5" y="20.7" width="6.7" height="6.7" fill="#eaebf1"/><rect x="65.0" y="20.7" width="6.7" height="6.7" fill="#eaebf1"/><rect x="71.5" y="20.7" width="6.7" height="6.7" fill="#cfd1da"/><rect x="78.0" y="20.7" width="6.7" height="6.7" fill="#c2c4cf"/><rect x="84.5" y="20.7" width="6.7" height="6.7" fill="#dddee5"/><rect x="91.0" y="20.7" width="6.7" height="6.7" fill="#dddee5"/><rect x="97.5" y="20.7" width="6.7" height="6.7" fill="#cfd1da"/><rect x="104.0" y="20.7" width="6.7" height="6.7" fill="#eaebf1"/><rect x="110.5" y="20.7" width="6.7" height="6.7" fill="#cfd1da"/><rect x="117.0" y="20.7" width="6.7" height="6.7" fill="#eaebf1"/><rect x="0.0" y="27.2" width="6.7" height="6.7" fill="#eaebf1"/><rect x="6.5" y="27.2" width="6.7" height="6.7" fill="#cfd1da"/><rect x="13.0" y="27.2" width="6.7" height="6.7" fill="#eaebf1"/><rect x="19.5" y="27.2" width="6.7" height="6.7" fill="#eaebf1"/><rect x="26.0" y="27.2" width="6.7" height="6.7" fill="#eaebf1"/><rect x="32.5" y="27.2" width="6.7" height="6.7" fill="#cfd1da"/><rect x="52.0" y="27.2" width="6.7" height="6.7" fill="#cfd1da"/><rect x="58.5" y="27.2" width="6.7" height="6.7" fill="#eaebf1"/><rect x="0.0" y="33.7" width="6.7" height="6.7" fill="#dddee5"/><rect x="6.5" y="33.7" width="6.7" height="6.7" fill="#a8aab8"/><rect x="13.0" y="33.7" width="6.7" height="6.7" fill="#c2c4cf"/><rect x="19.5" y="33.7" width="6.7" height="6.7" fill="#c2c4cf"/><rect x="26.0" y="33.7" width="6.7" height="6.7" fill="#c2c4cf"/><rect x="32.5" y="33.7" width="6.7" height="6.7" fill="#a8aab8"/><rect x="45.5" y="33.7" width="6.7" height="6.7" fill="#eaebf1"/><rect x="52.0" y="33.7" width="6.7" height="6.7" fill="#b5b7c3"/><rect x="58.5" y="33.7" width="6.7" height="6.7" fill="#cfd1da"/><rect x="0.0" y="40.2" width="6.7" height="6.7" fill="#eaebf1"/><rect x="6.5" y="40.2" width="6.7" height="6.7" fill="#dddee5"/><rect x="13.0" y="40.2" width="6.7" height="6.7" fill="#dddee5"/><rect x="19.5" y="40.2" width="6.7" height="6.7" fill="#dddee5"/><rect x="26.0" y="40.2" width="6.7" height="6.7" fill="#dddee5"/><rect x="32.5" y="40.2" width="6.7" height="6.7" fill="#cfd1da"/><rect x="52.0" y="40.2" width="6.7" height="6.7" fill="#dddee5"/><rect x="58.5" y="40.2" width="6.7" height="6.7" fill="#eaebf1"/></svg>
<div class="num" style="left:840px;top:349.1px">0</div>
<div class="num" style="left:970px;top:349.1px">0</div>
<div class="num" style="left:1449.5px;top:349.1px">0</div>
<svg class="abs" style="left:990px;top:355.09999999999997px" width="9" height="6" viewBox="0 0 9 6"><path d="M0.6 0.6 H8.4 L4.5 5.2 Z" fill="#2a3050" stroke="#2a3050" stroke-width="0.6" stroke-linejoin="round"/></svg>
<svg class="abs" style="left:1469.5px;top:355.09999999999997px" width="9" height="6" viewBox="0 0 9 6"><path d="M0.6 0.6 H8.4 L4.5 5.2 Z" fill="#2a3050" stroke="#2a3050" stroke-width="0.6" stroke-linejoin="round"/></svg>
<div class="inp" style="left:1101px;top:340.7px;width:129px;border-color:#4468f5;box-shadow:0 0 0 1.5px rgba(68,104,245,0.12),0 2px 10px rgba(60,80,200,0.14)">0</div>
<div class="abs" style="left:1124.6px;top:350.5px;width:1.2px;height:17px;background:#111"></div>
<div class="inp" style="left:1297px;top:340.7px;width:127px">0</div>
<svg class="cb" style="left:312px;top:403.3px" viewBox="0 0 18 18"><rect x="0.85" y="0.85" width="14.9" height="15.1" rx="3.7" fill="#fff" stroke="#8088ad" stroke-width="1.7"/></svg>
<svg class="abs" style="left:365px;top:391.09999999999997px" width="32.5" height="45.5" shape-rendering="crispEdges"><rect x="0.0" y="0.0" width="6.8" height="6.8" fill="#f8f4ee"/><rect x="6.5" y="0.0" width="6.8" height="6.8" fill="#f6eedd"/><rect x="13.0" y="0.0" width="6.8" height="6.8" fill="#f5efe3"/><rect x="19.5" y="0.0" width="6.8" height="6.8" fill="#f3ecdc"/><rect x="26.0" y="0.0" width="6.8" height="6.8" fill="#f7f3ee"/><rect x="0.0" y="6.5" width="6.8" height="6.8" fill="#f7f2ea"/><rect x="6.5" y="6.5" width="6.8" height="6.8" fill="#f1d383"/><rect x="13.0" y="6.5" width="6.8" height="6.8" fill="#e3ab40"/><rect x="19.5" y="6.5" width="6.8" height="6.8" fill="#ecdcb8"/><rect x="26.0" y="6.5" width="6.8" height="6.8" fill="#f5f0e8"/><rect x="0.0" y="13.0" width="6.8" height="6.8" fill="#f6f0e6"/><rect x="6.5" y="13.0" width="6.8" height="6.8" fill="#efcb70"/><rect x="13.0" y="13.0" width="6.8" height="6.8" fill="#e2a93c"/><rect x="19.5" y="13.0" width="6.8" height="6.8" fill="#e8d4a8"/><rect x="26.0" y="13.0" width="6.8" height="6.8" fill="#f4eee4"/><rect x="0.0" y="19.5" width="6.8" height="6.8" fill="#f5eee2"/><rect x="6.5" y="19.5" width="6.8" height="6.8" fill="#ecc468"/><rect x="13.0" y="19.5" width="6.8" height="6.8" fill="#e1a638"/><rect x="19.5" y="19.5" width="6.8" height="6.8" fill="#e6cc98"/><rect x="26.0" y="19.5" width="6.8" height="6.8" fill="#f3ece0"/><rect x="0.0" y="26.0" width="6.8" height="6.8" fill="#f3e8d0"/><rect x="6.5" y="26.0" width="6.8" height="6.8" fill="#e3a83a"/><rect x="13.0" y="26.0" width="6.8" height="6.8" fill="#dfa234"/><rect x="19.5" y="26.0" width="6.8" height="6.8" fill="#dcae5c"/><rect x="26.0" y="26.0" width="6.8" height="6.8" fill="#efe4d0"/><rect x="0.0" y="32.5" width="6.8" height="6.8" fill="#eddcb8"/><rect x="6.5" y="32.5" width="6.8" height="6.8" fill="#dba040"/><rect x="13.0" y="32.5" width="6.8" height="6.8" fill="#d89c3c"/><rect x="19.5" y="32.5" width="6.8" height="6.8" fill="#d29c4c"/><rect x="26.0" y="32.5" width="6.8" height="6.8" fill="#e9dcc6"/><rect x="0.0" y="39.0" width="6.8" height="6.8" fill="#f6f2ec"/><rect x="6.5" y="39.0" width="6.8" height="6.8" fill="#f3ece0"/><rect x="13.0" y="39.0" width="6.8" height="6.8" fill="#f2eadc"/><rect x="19.5" y="39.0" width="6.8" height="6.8" fill="#f2ebe0"/><rect x="26.0" y="39.0" width="6.8" height="6.8" fill="#f6f3ee"/></svg>
<svg class="abs" style="left:410.5px;top:384.4px" width="124.5" height="46.5" shape-rendering="crispEdges"><rect x="0.0" y="13.0" width="6.7" height="6.7" fill="#e3e3e8"/><rect x="6.5" y="13.0" width="6.7" height="6.7" fill="#c7c8d0"/><rect x="13.0" y="13.0" width="6.7" height="6.7" fill="#d5d6dc"/><rect x="19.5" y="13.0" width="6.7" height="6.7" fill="#c7c8d0"/><rect x="26.0" y="13.0" width="6.7" height="6.7" fill="#c7c8d0"/><rect x="32.5" y="13.0" width="6.7" height="6.7" fill="#c7c8d0"/><rect x="39.0" y="13.0" width="6.7" height="6.7" fill="#f1f1f3"/><rect x="45.5" y="13.0" width="6.7" height="6.7" fill="#b8bac5"/><rect x="52.0" y="13.0" width="6.7" height="6.7" fill="#c7c8d0"/><rect x="58.5" y="13.0" width="6.7" height="6.7" fill="#d5d6dc"/><rect x="65.0" y="13.0" width="6.7" height="6.7" fill="#d5d6dc"/><rect x="71.5" y="13.0" width="6.7" height="6.7" fill="#c7c8d0"/><rect x="78.0" y="13.0" width="6.7" height="6.7" fill="#c7c8d0"/><rect x="84.5" y="13.0" width="6.7" height="6.7" fill="#c7c8d0"/><rect x="91.0" y="13.0" width="6.7" height="6.7" fill="#c7c8d0"/><rect x="97.5" y="13.0" width="6.7" height="6.7" fill="#b8bac5"/><rect x="104.0" y="13.0" width="6.7" height="6.7" fill="#d5d6dc"/><rect x="110.5" y="13.0" width="6.7" height="6.7" fill="#b8bac5"/><rect x="117.0" y="13.0" width="6.7" height="6.7" fill="#d5d6dc"/><rect x="0.0" y="19.5" width="6.7" height="6.7" fill="#f1f1f3"/><rect x="6.5" y="19.5" width="6.7" height="6.7" fill="#d5d6dc"/><rect x="13.0" y="19.5" width="6.7" height="6.7" fill="#e3e3e8"/><rect x="19.5" y="19.5" width="6.7" height="6.7" fill="#b8bac5"/><rect x="26.0" y="19.5" width="6.7" height="6.7" fill="#d5d6dc"/><rect x="32.5" y="19.5" width="6.7" height="6.7" fill="#c7c8d0"/><rect x="39.0" y="19.5" width="6.7" height="6.7" fill="#e3e3e8"/><rect x="45.5" y="19.5" width="6.7" height="6.7" fill="#e3e3e8"/><rect x="52.0" y="19.5" width="6.7" height="6.7" fill="#c7c8d0"/><rect x="58.5" y="19.5" width="6.7" height="6.7" fill="#d5d6dc"/><rect x="65.0" y="19.5" width="6.7" height="6.7" fill="#f1f1f3"/><rect x="71.5" y="19.5" width="6.7" height="6.7" fill="#e3e3e8"/><rect x="78.0" y="19.5" width="6.7" height="6.7" fill="#c7c8d0"/><rect x="84.5" y="19.5" width="6.7" height="6.7" fill="#b8bac5"/><rect x="91.0" y="19.5" width="6.7" height="6.7" fill="#e3e3e8"/><rect x="97.5" y="19.5" width="6.7" height="6.7" fill="#d5d6dc"/><rect x="104.0" y="19.5" width="6.7" height="6.7" fill="#f1f1f3"/><rect x="110.5" y="19.5" width="6.7" height="6.7" fill="#b8bac5"/><rect x="117.0" y="19.5" width="6.7" height="6.7" fill="#f1f1f3"/><rect x="0.0" y="26.0" width="6.7" height="6.7" fill="#f1f1f3"/><rect x="6.5" y="26.0" width="6.7" height="6.7" fill="#f1f1f3"/><rect x="13.0" y="26.0" width="6.7" height="6.7" fill="#f1f1f3"/><rect x="19.5" y="26.0" width="6.7" height="6.7" fill="#e3e3e8"/><rect x="26.0" y="26.0" width="6.7" height="6.7" fill="#f1f1f3"/><rect x="39.0" y="26.0" width="6.7" height="6.7" fill="#f1f1f3"/><rect x="45.5" y="26.0" width="6.7" height="6.7" fill="#f1f1f3"/><rect x="52.0" y="26.0" width="6.7" height="6.7" fill="#e3e3e8"/><rect x="58.5" y="26.0" width="6.7" height="6.7" fill="#f1f1f3"/><rect x="65.0" y="26.0" width="6.7" height="6.7" fill="#f1f1f3"/><rect x="78.0" y="26.0" width="6.7" height="6.7" fill="#f1f1f3"/><rect x="84.5" y="26.0" width="6.7" height="6.7" fill="#f1f1f3"/><rect x="6.5" y="32.5" width="6.7" height="6.7" fill="#b8bac5"/><rect x="13.0" y="32.5" width="6.7" height="6.7" fill="#c7c8d0"/><rect x="19.5" y="32.5" width="6.7" height="6.7" fill="#c7c8d0"/><rect x="26.0" y="32.5" width="6.7" height="6.7" fill="#d5d6dc"/><rect x="32.5" y="32.5" width="6.7" height="6.7" fill="#d5d6dc"/><rect x="39.0" y="32.5" width="6.7" height="6.7" fill="#b8bac5"/><rect x="45.5" y="32.5" width="6.7" height="6.7" fill="#aaacb9"/><rect x="52.0" y="32.5" width="6.7" height="6.7" fill="#b8bac5"/><rect x="58.5" y="32.5" width="6.7" height="6.7" fill="#d5d6dc"/><rect x="65.0" y="32.5" width="6.7" height="6.7" fill="#f1f1f3"/><rect x="71.5" y="32.5" width="6.7" height="6.7" fill="#b8bac5"/><rect x="78.0" y="32.5" width="6.7" height="6.7" fill="#aaacb9"/><rect x="84.5" y="32.5" width="6.7" height="6.7" fill="#f1f1f3"/><rect x="6.5" y="39.0" width="6.7" height="6.7" fill="#f1f1f3"/><rect x="13.0" y="39.0" width="6.7" height="6.7" fill="#e3e3e8"/><rect x="19.5" y="39.0" width="6.7" height="6.7" fill="#d5d6dc"/><rect x="26.0" y="39.0" width="6.7" height="6.7" fill="#d5d6dc"/><rect x="32.5" y="39.0" width="6.7" height="6.7" fill="#d5d6dc"/><rect x="39.0" y="39.0" width="6.7" height="6.7" fill="#d5d6dc"/><rect x="45.5" y="39.0" width="6.7" height="6.7" fill="#e3e3e8"/><rect x="52.0" y="39.0" width="6.7" height="6.7" fill="#f1f1f3"/><rect x="58.5" y="39.0" width="6.7" height="6.7" fill="#e3e3e8"/><rect x="71.5" y="39.0" width="6.7" height="6.7" fill="#e3e3e8"/><rect x="78.0" y="39.0" width="6.7" height="6.7" fill="#d5d6dc"/><rect x="84.5" y="39.0" width="6.7" height="6.7" fill="#f1f1f3"/></svg>
<div class="num" style="left:840px;top:402.5px">0</div>
<div class="num" style="left:970px;top:402.5px">0</div>
<div class="num" style="left:1449.5px;top:402.5px">0</div>
<div class="inp" style="left:1101px;top:394.1px;width:129px">0</div>
<div class="inp" style="left:1297px;top:394.1px;width:127px">0</div>
<svg class="cb" style="left:312px;top:456.7px" viewBox="0 0 18 18"><rect x="0.85" y="0.85" width="14.9" height="15.1" rx="3.7" fill="#fff" stroke="#8088ad" stroke-width="1.7"/></svg>
<svg class="abs" style="left:358.5px;top:443.3px" width="45.5" height="45.5" shape-rendering="crispEdges"><rect x="0.0" y="0.0" width="6.8" height="6.8" fill="#f8f8fd"/><rect x="6.5" y="0.0" width="6.8" height="6.8" fill="#f8f8fd"/><rect x="13.0" y="0.0" width="6.8" height="6.8" fill="#f8f8fd"/><rect x="19.5" y="0.0" width="6.8" height="6.8" fill="#f8f8fd"/><rect x="26.0" y="0.0" width="6.8" height="6.8" fill="#f8f8fd"/><rect x="32.5" y="0.0" width="6.8" height="6.8" fill="#f8f8fd"/><rect x="39.0" y="0.0" width="6.8" height="6.8" fill="#f8f8fd"/><rect x="0.0" y="6.5" width="6.8" height="6.8" fill="#f8f8fd"/><rect x="6.5" y="6.5" width="6.8" height="6.8" fill="#f8f8fd"/><rect x="13.0" y="6.5" width="6.8" height="6.8" fill="#f8f8fd"/><rect x="19.5" y="6.5" width="6.8" height="6.8" fill="#f8f8fd"/><rect x="26.0" y="6.5" width="6.8" height="6.8" fill="#f8f8fd"/><rect x="32.5" y="6.5" width="6.8" height="6.8" fill="#f8f8fd"/><rect x="39.0" y="6.5" width="6.8" height="6.8" fill="#f8f8fd"/><rect x="0.0" y="13.0" width="6.8" height="6.8" fill="#f8f8fd"/><rect x="6.5" y="13.0" width="6.8" height="6.8" fill="#f8f8fd"/><rect x="13.0" y="13.0" width="6.8" height="6.8" fill="#eeeef7"/><rect x="19.5" y="13.0" width="6.8" height="6.8" fill="#eeeef7"/><rect x="26.0" y="13.0" width="6.8" height="6.8" fill="#eeeef7"/><rect x="32.5" y="13.0" width="6.8" height="6.8" fill="#f8f8fd"/><rect x="39.0" y="13.0" width="6.8" height="6.8" fill="#f8f8fd"/><rect x="0.0" y="19.5" width="6.8" height="6.8" fill="#f8f8fd"/><rect x="6.5" y="19.5" width="6.8" height="6.8" fill="#f8f8fd"/><rect x="13.0" y="19.5" width="6.8" height="6.8" fill="#eeeef7"/><rect x="19.5" y="19.5" width="6.8" height="6.8" fill="#eeeef7"/><rect x="26.0" y="19.5" width="6.8" height="6.8" fill="#eeeef7"/><rect x="32.5" y="19.5" width="6.8" height="6.8" fill="#f8f8fd"/><rect x="39.0" y="19.5" width="6.8" height="6.8" fill="#f8f8fd"/><rect x="0.0" y="26.0" width="6.8" height="6.8" fill="#f8f8fd"/><rect x="6.5" y="26.0" width="6.8" height="6.8" fill="#f8f8fd"/><rect x="13.0" y="26.0" width="6.8" height="6.8" fill="#eeeef7"/><rect x="19.5" y="26.0" width="6.8" height="6.8" fill="#eeeef7"/><rect x="26.0" y="26.0" width="6.8" height="6.8" fill="#eeeef7"/><rect x="32.5" y="26.0" width="6.8" height="6.8" fill="#f8f8fd"/><rect x="39.0" y="26.0" width="6.8" height="6.8" fill="#f8f8fd"/><rect x="0.0" y="32.5" width="6.8" height="6.8" fill="#f8f8fd"/><rect x="6.5" y="32.5" width="6.8" height="6.8" fill="#f8f8fd"/><rect x="13.0" y="32.5" width="6.8" height="6.8" fill="#f8f8fd"/><rect x="19.5" y="32.5" width="6.8" height="6.8" fill="#f8f8fd"/><rect x="26.0" y="32.5" width="6.8" height="6.8" fill="#f8f8fd"/><rect x="32.5" y="32.5" width="6.8" height="6.8" fill="#f8f8fd"/><rect x="39.0" y="32.5" width="6.8" height="6.8" fill="#f8f8fd"/><rect x="0.0" y="39.0" width="6.8" height="6.8" fill="#f8f8fd"/><rect x="6.5" y="39.0" width="6.8" height="6.8" fill="#f8f8fd"/><rect x="13.0" y="39.0" width="6.8" height="6.8" fill="#f8f8fd"/><rect x="19.5" y="39.0" width="6.8" height="6.8" fill="#f8f8fd"/><rect x="26.0" y="39.0" width="6.8" height="6.8" fill="#f8f8fd"/><rect x="32.5" y="39.0" width="6.8" height="6.8" fill="#f8f8fd"/><rect x="39.0" y="39.0" width="6.8" height="6.8" fill="#f8f8fd"/></svg>
<svg class="abs" style="left:410.5px;top:437.8px" width="131.0" height="38.7" shape-rendering="crispEdges"><rect x="0.0" y="18.2" width="6.7" height="6.7" fill="#f1f1f3"/><rect x="6.5" y="18.2" width="6.7" height="6.7" fill="#d5d6dc"/><rect x="45.5" y="18.2" width="6.7" height="6.7" fill="#f1f1f3"/><rect x="71.5" y="18.2" width="6.7" height="6.7" fill="#f1f1f3"/><rect x="91.0" y="18.2" width="6.7" height="6.7" fill="#e3e3e8"/><rect x="110.5" y="18.2" width="6.7" height="6.7" fill="#f1f1f3"/><rect x="117.0" y="18.2" width="6.7" height="6.7" fill="#e3e3e8"/><rect x="123.5" y="18.2" width="6.7" height="6.7" fill="#f1f1f3"/><rect x="0.0" y="24.7" width="6.7" height="6.7" fill="#e3e3e8"/><rect x="6.5" y="24.7" width="6.7" height="6.7" fill="#d5d6dc"/><rect x="13.0" y="24.7" width="6.7" height="6.7" fill="#b8bac5"/><rect x="19.5" y="24.7" width="6.7" height="6.7" fill="#aaacb9"/><rect x="26.0" y="24.7" width="6.7" height="6.7" fill="#aaacb9"/><rect x="32.5" y="24.7" width="6.7" height="6.7" fill="#aaacb9"/><rect x="39.0" y="24.7" width="6.7" height="6.7" fill="#9c9fad"/><rect x="45.5" y="24.7" width="6.7" height="6.7" fill="#b8bac5"/><rect x="52.0" y="24.7" width="6.7" height="6.7" fill="#aaacb9"/><rect x="58.5" y="24.7" width="6.7" height="6.7" fill="#aaacb9"/><rect x="71.5" y="24.7" width="6.7" height="6.7" fill="#b8bac5"/><rect x="78.0" y="24.7" width="6.7" height="6.7" fill="#aaacb9"/><rect x="84.5" y="24.7" width="6.7" height="6.7" fill="#aaacb9"/><rect x="91.0" y="24.7" width="6.7" height="6.7" fill="#b8bac5"/><rect x="97.5" y="24.7" width="6.7" height="6.7" fill="#9c9fad"/><rect x="104.0" y="24.7" width="6.7" height="6.7" fill="#aaacb9"/><rect x="110.5" y="24.7" width="6.7" height="6.7" fill="#aaacb9"/><rect x="117.0" y="24.7" width="6.7" height="6.7" fill="#d5d6dc"/><rect x="123.5" y="24.7" width="6.7" height="6.7" fill="#e3e3e8"/><rect x="0.0" y="31.2" width="6.7" height="6.7" fill="#f1f1f3"/><rect x="6.5" y="31.2" width="6.7" height="6.7" fill="#e3e3e8"/><rect x="13.0" y="31.2" width="6.7" height="6.7" fill="#f1f1f3"/><rect x="19.5" y="31.2" width="6.7" height="6.7" fill="#e3e3e8"/><rect x="26.0" y="31.2" width="6.7" height="6.7" fill="#e3e3e8"/><rect x="32.5" y="31.2" width="6.7" height="6.7" fill="#e3e3e8"/><rect x="39.0" y="31.2" width="6.7" height="6.7" fill="#f1f1f3"/><rect x="45.5" y="31.2" width="6.7" height="6.7" fill="#d5d6dc"/><rect x="52.0" y="31.2" width="6.7" height="6.7" fill="#f1f1f3"/><rect x="58.5" y="31.2" width="6.7" height="6.7" fill="#e3e3e8"/><rect x="71.5" y="31.2" width="6.7" height="6.7" fill="#f1f1f3"/><rect x="78.0" y="31.2" width="6.7" height="6.7" fill="#f1f1f3"/><rect x="84.5" y="31.2" width="6.7" height="6.7" fill="#e3e3e8"/><rect x="91.0" y="31.2" width="6.7" height="6.7" fill="#e3e3e8"/><rect x="97.5" y="31.2" width="6.7" height="6.7" fill="#d5d6dc"/><rect x="104.0" y="31.2" width="6.7" height="6.7" fill="#e3e3e8"/><rect x="110.5" y="31.2" width="6.7" height="6.7" fill="#e3e3e8"/><rect x="117.0" y="31.2" width="6.7" height="6.7" fill="#f1f1f3"/><rect x="123.5" y="31.2" width="6.7" height="6.7" fill="#f1f1f3"/></svg>
<div class="num" style="left:840px;top:455.9px">0</div>
<div class="num" style="left:970px;top:455.9px">0</div>
<div class="num" style="left:1449.5px;top:455.9px">0</div>
<div class="inp" style="left:1101px;top:447.5px;width:129px">0</div>
<div class="inp" style="left:1297px;top:447.5px;width:127px">0</div>
<svg class="cb" style="left:312px;top:510.1px" viewBox="0 0 18 18"><rect x="0.85" y="0.85" width="14.9" height="15.1" rx="3.7" fill="#fff" stroke="#8088ad" stroke-width="1.7"/></svg>
<svg class="abs" style="left:358.5px;top:495.5px" width="45.5" height="45.5" shape-rendering="crispEdges"><rect x="0.0" y="0.0" width="6.8" height="6.8" fill="#efefea"/><rect x="6.5" y="0.0" width="6.8" height="6.8" fill="#eeeee9"/><rect x="13.0" y="0.0" width="6.8" height="6.8" fill="#ecece7"/><rect x="19.5" y="0.0" width="6.8" height="6.8" fill="#edede8"/><rect x="26.0" y="0.0" width="6.8" height="6.8" fill="#ecece7"/><rect x="32.5" y="0.0" width="6.8" height="6.8" fill="#eeeee9"/><rect x="39.0" y="0.0" width="6.8" height="6.8" fill="#f0f0ec"/><rect x="0.0" y="6.5" width="6.8" height="6.8" fill="#efefea"/><rect x="6.5" y="6.5" width="6.8" height="6.8" fill="#ebeae5"/><rect x="13.0" y="6.5" width="6.8" height="6.8" fill="#eae9e3"/><rect x="19.5" y="6.5" width="6.8" height="6.8" fill="#e8e7e1"/><rect x="26.0" y="6.5" width="6.8" height="6.8" fill="#ebeae5"/><rect x="32.5" y="6.5" width="6.8" height="6.8" fill="#eae9e3"/><rect x="39.0" y="6.5" width="6.8" height="6.8" fill="#f0f0ec"/><rect x="0.0" y="13.0" width="6.8" height="6.8" fill="#efefea"/><rect x="6.5" y="13.0" width="6.8" height="6.8" fill="#eae9e3"/><rect x="13.0" y="13.0" width="6.8" height="6.8" fill="#e8e7e1"/><rect x="19.5" y="13.0" width="6.8" height="6.8" fill="#ebeae5"/><rect x="26.0" y="13.0" width="6.8" height="6.8" fill="#eae9e3"/><rect x="32.5" y="13.0" width="6.8" height="6.8" fill="#e8e7e1"/><rect x="39.0" y="13.0" width="6.8" height="6.8" fill="#f0f0ec"/><rect x="0.0" y="19.5" width="6.8" height="6.8" fill="#efefea"/><rect x="6.5" y="19.5" width="6.8" height="6.8" fill="#e8e7e1"/><rect x="13.0" y="19.5" width="6.8" height="6.8" fill="#ebeae5"/><rect x="19.5" y="19.5" width="6.8" height="6.8" fill="#eae9e3"/><rect x="26.0" y="19.5" width="6.8" height="6.8" fill="#e8e7e1"/><rect x="32.5" y="19.5" width="6.8" height="6.8" fill="#ebeae5"/><rect x="39.0" y="19.5" width="6.8" height="6.8" fill="#f0f0ec"/><rect x="0.0" y="26.0" width="6.8" height="6.8" fill="#efefea"/><rect x="6.5" y="26.0" width="6.8" height="6.8" fill="#ebeae5"/><rect x="13.0" y="26.0" width="6.8" height="6.8" fill="#eae9e3"/><rect x="19.5" y="26.0" width="6.8" height="6.8" fill="#e8e7e1"/><rect x="26.0" y="26.0" width="6.8" height="6.8" fill="#ebeae5"/><rect x="32.5" y="26.0" width="6.8" height="6.8" fill="#eae9e3"/><rect x="39.0" y="26.0" width="6.8" height="6.8" fill="#f0f0ec"/><rect x="0.0" y="32.5" width="6.8" height="6.8" fill="#efefea"/><rect x="6.5" y="32.5" width="6.8" height="6.8" fill="#eae9e3"/><rect x="13.0" y="32.5" width="6.8" height="6.8" fill="#e8e7e1"/><rect x="19.5" y="32.5" width="6.8" height="6.8" fill="#ebeae5"/><rect x="26.0" y="32.5" width="6.8" height="6.8" fill="#eae9e3"/><rect x="32.5" y="32.5" width="6.8" height="6.8" fill="#e8e7e1"/><rect x="39.0" y="32.5" width="6.8" height="6.8" fill="#f0f0ec"/><rect x="0.0" y="39.0" width="6.8" height="6.8" fill="#efefea"/><rect x="6.5" y="39.0" width="6.8" height="6.8" fill="#eeeee9"/><rect x="13.0" y="39.0" width="6.8" height="6.8" fill="#ecece7"/><rect x="19.5" y="39.0" width="6.8" height="6.8" fill="#edede8"/><rect x="26.0" y="39.0" width="6.8" height="6.8" fill="#ecece7"/><rect x="32.5" y="39.0" width="6.8" height="6.8" fill="#eeeee9"/><rect x="39.0" y="39.0" width="6.8" height="6.8" fill="#f0f0ec"/></svg>
<svg class="abs" style="left:410.5px;top:491.2px" width="53.0" height="44.4" shape-rendering="crispEdges"><rect x="0.0" y="10.8" width="6.7" height="6.7" fill="#f1f1f3"/><rect x="6.5" y="10.8" width="6.7" height="6.7" fill="#d5d6dc"/><rect x="19.5" y="10.8" width="6.7" height="6.7" fill="#f1f1f3"/><rect x="26.0" y="10.8" width="6.7" height="6.7" fill="#e3e3e8"/><rect x="32.5" y="10.8" width="6.7" height="6.7" fill="#f1f1f3"/><rect x="39.0" y="10.8" width="6.7" height="6.7" fill="#d5d6dc"/><rect x="45.5" y="10.8" width="6.7" height="6.7" fill="#f1f1f3"/><rect x="6.5" y="17.3" width="6.7" height="6.7" fill="#d5d6dc"/><rect x="13.0" y="17.3" width="6.7" height="6.7" fill="#e3e3e8"/><rect x="19.5" y="17.3" width="6.7" height="6.7" fill="#b8bac5"/><rect x="26.0" y="17.3" width="6.7" height="6.7" fill="#b8bac5"/><rect x="32.5" y="17.3" width="6.7" height="6.7" fill="#b8bac5"/><rect x="39.0" y="17.3" width="6.7" height="6.7" fill="#c7c8d0"/><rect x="45.5" y="17.3" width="6.7" height="6.7" fill="#f1f1f3"/><rect x="0.0" y="30.4" width="6.7" height="6.7" fill="#e3e3e8"/><rect x="6.5" y="30.4" width="6.7" height="6.7" fill="#aaacb9"/><rect x="13.0" y="30.4" width="6.7" height="6.7" fill="#c7c8d0"/><rect x="19.5" y="30.4" width="6.7" height="6.7" fill="#aaacb9"/><rect x="26.0" y="30.4" width="6.7" height="6.7" fill="#aaacb9"/><rect x="32.5" y="30.4" width="6.7" height="6.7" fill="#b8bac5"/><rect x="39.0" y="30.4" width="6.7" height="6.7" fill="#d5d6dc"/><rect x="6.5" y="36.9" width="6.7" height="6.7" fill="#d5d6dc"/><rect x="13.0" y="36.9" width="6.7" height="6.7" fill="#d5d6dc"/><rect x="19.5" y="36.9" width="6.7" height="6.7" fill="#c7c8d0"/><rect x="26.0" y="36.9" width="6.7" height="6.7" fill="#c7c8d0"/><rect x="32.5" y="36.9" width="6.7" height="6.7" fill="#b8bac5"/><rect x="39.0" y="36.9" width="6.7" height="6.7" fill="#d5d6dc"/></svg>
<div class="num" style="left:840px;top:509.3px">0</div>
<div class="num" style="left:970px;top:509.3px">0</div>
<div class="num" style="left:1449.5px;top:509.3px">0</div>
<div class="inp" style="left:1101px;top:500.9px;width:129px">0</div>
<div class="inp" style="left:1297px;top:500.9px;width:127px">0</div>
<svg class="cb" style="left:312px;top:563.5px" viewBox="0 0 18 18"><rect x="0.85" y="0.85" width="14.9" height="15.1" rx="3.7" fill="#fff" stroke="#8088ad" stroke-width="1.7"/></svg>
<svg class="abs" style="left:365px;top:548.0px" width="32.5" height="45.5" shape-rendering="crispEdges"><rect x="0.0" y="0.0" width="6.8" height="6.8" fill="#8b8890"/><rect x="6.5" y="0.0" width="6.8" height="6.8" fill="#6e6a74"/><rect x="13.0" y="0.0" width="6.8" height="6.8" fill="#5c5862"/><rect x="19.5" y="0.0" width="6.8" height="6.8" fill="#7a7680"/><rect x="26.0" y="0.0" width="6.8" height="6.8" fill="#a8a4a8"/><rect x="0.0" y="6.5" width="6.8" height="6.8" fill="#2e2830"/><rect x="6.5" y="6.5" width="6.8" height="6.8" fill="#1e1a22"/><rect x="13.0" y="6.5" width="6.8" height="6.8" fill="#2a2228"/><rect x="19.5" y="6.5" width="6.8" height="6.8" fill="#3a3036"/><rect x="26.0" y="6.5" width="6.8" height="6.8" fill="#8c8480"/><rect x="0.0" y="13.0" width="6.8" height="6.8" fill="#8c6a50"/><rect x="6.5" y="13.0" width="6.8" height="6.8" fill="#9a7656"/><rect x="13.0" y="13.0" width="6.8" height="6.8" fill="#7e6450"/><rect x="19.5" y="13.0" width="6.8" height="6.8" fill="#6a5a50"/><rect x="26.0" y="13.0" width="6.8" height="6.8" fill="#9c9488"/><rect x="0.0" y="19.5" width="6.8" height="6.8" fill="#b4622c"/><rect x="6.5" y="19.5" width="6.8" height="6.8" fill="#c66a24"/><rect x="13.0" y="19.5" width="6.8" height="6.8" fill="#a85a28"/><rect x="19.5" y="19.5" width="6.8" height="6.8" fill="#d88830"/><rect x="26.0" y="19.5" width="6.8" height="6.8" fill="#e8a860"/><rect x="0.0" y="26.0" width="6.8" height="6.8" fill="#6a4a30"/><rect x="6.5" y="26.0" width="6.8" height="6.8" fill="#3a3020"/><rect x="13.0" y="26.0" width="6.8" height="6.8" fill="#5a4428"/><rect x="19.5" y="26.0" width="6.8" height="6.8" fill="#c07028"/><rect x="26.0" y="26.0" width="6.8" height="6.8" fill="#e09848"/><rect x="0.0" y="32.5" width="6.8" height="6.8" fill="#3c3428"/><rect x="6.5" y="32.5" width="6.8" height="6.8" fill="#28241c"/><rect x="13.0" y="32.5" width="6.8" height="6.8" fill="#4a3c28"/><rect x="19.5" y="32.5" width="6.8" height="6.8" fill="#a86a30"/><rect x="26.0" y="32.5" width="6.8" height="6.8" fill="#d8a878"/><rect x="0.0" y="39.0" width="6.8" height="6.8" fill="#2c2424"/><rect x="6.5" y="39.0" width="6.8" height="6.8" fill="#3a3030"/><rect x="13.0" y="39.0" width="6.8" height="6.8" fill="#6a5c54"/><rect x="19.5" y="39.0" width="6.8" height="6.8" fill="#9c8c80"/><rect x="26.0" y="39.0" width="6.8" height="6.8" fill="#c8bcb0"/></svg>
<svg class="abs" style="left:410.5px;top:544.6px" width="131.0" height="43.4" shape-rendering="crispEdges"><rect x="0.0" y="9.9" width="6.7" height="6.7" fill="#f1f1f3"/><rect x="6.5" y="9.9" width="6.7" height="6.7" fill="#f1f1f3"/><rect x="13.0" y="9.9" width="6.7" height="6.7" fill="#f1f1f3"/><rect x="52.0" y="9.9" width="6.7" height="6.7" fill="#d5d6dc"/><rect x="104.0" y="9.9" width="6.7" height="6.7" fill="#e3e3e8"/><rect x="0.0" y="16.4" width="6.7" height="6.7" fill="#e3e3e8"/><rect x="6.5" y="16.4" width="6.7" height="6.7" fill="#c7c8d0"/><rect x="13.0" y="16.4" width="6.7" height="6.7" fill="#c7c8d0"/><rect x="19.5" y="16.4" width="6.7" height="6.7" fill="#b8bac5"/><rect x="26.0" y="16.4" width="6.7" height="6.7" fill="#c7c8d0"/><rect x="32.5" y="16.4" width="6.7" height="6.7" fill="#b8bac5"/><rect x="39.0" y="16.4" width="6.7" height="6.7" fill="#b8bac5"/><rect x="45.5" y="16.4" width="6.7" height="6.7" fill="#f1f1f3"/><rect x="52.0" y="16.4" width="6.7" height="6.7" fill="#d5d6dc"/><rect x="58.5" y="16.4" width="6.7" height="6.7" fill="#b8bac5"/><rect x="65.0" y="16.4" width="6.7" height="6.7" fill="#b8bac5"/><rect x="71.5" y="16.4" width="6.7" height="6.7" fill="#c7c8d0"/><rect x="78.0" y="16.4" width="6.7" height="6.7" fill="#b8bac5"/><rect x="84.5" y="16.4" width="6.7" height="6.7" fill="#b8bac5"/><rect x="91.0" y="16.4" width="6.7" height="6.7" fill="#aaacb9"/><rect x="104.0" y="16.4" width="6.7" height="6.7" fill="#e3e3e8"/><rect x="110.5" y="16.4" width="6.7" height="6.7" fill="#b8bac5"/><rect x="117.0" y="16.4" width="6.7" height="6.7" fill="#aaacb9"/><rect x="123.5" y="16.4" width="6.7" height="6.7" fill="#b8bac5"/><rect x="0.0" y="22.9" width="6.7" height="6.7" fill="#f1f1f3"/><rect x="6.5" y="22.9" width="6.7" height="6.7" fill="#f1f1f3"/><rect x="13.0" y="22.9" width="6.7" height="6.7" fill="#e3e3e8"/><rect x="19.5" y="22.9" width="6.7" height="6.7" fill="#e3e3e8"/><rect x="26.0" y="22.9" width="6.7" height="6.7" fill="#e3e3e8"/><rect x="32.5" y="22.9" width="6.7" height="6.7" fill="#e3e3e8"/><rect x="39.0" y="22.9" width="6.7" height="6.7" fill="#d5d6dc"/><rect x="52.0" y="22.9" width="6.7" height="6.7" fill="#d5d6dc"/><rect x="58.5" y="22.9" width="6.7" height="6.7" fill="#e3e3e8"/><rect x="65.0" y="22.9" width="6.7" height="6.7" fill="#f1f1f3"/><rect x="71.5" y="22.9" width="6.7" height="6.7" fill="#f1f1f3"/><rect x="78.0" y="22.9" width="6.7" height="6.7" fill="#e3e3e8"/><rect x="84.5" y="22.9" width="6.7" height="6.7" fill="#c7c8d0"/><rect x="91.0" y="22.9" width="6.7" height="6.7" fill="#e3e3e8"/><rect x="104.0" y="22.9" width="6.7" height="6.7" fill="#e3e3e8"/><rect x="110.5" y="22.9" width="6.7" height="6.7" fill="#e3e3e8"/><rect x="117.0" y="22.9" width="6.7" height="6.7" fill="#e3e3e8"/><rect x="123.5" y="22.9" width="6.7" height="6.7" fill="#f1f1f3"/><rect x="0.0" y="29.4" width="6.7" height="6.7" fill="#f1f1f3"/><rect x="6.5" y="29.4" width="6.7" height="6.7" fill="#d5d6dc"/><rect x="0.0" y="35.9" width="6.7" height="6.7" fill="#f1f1f3"/><rect x="6.5" y="35.9" width="6.7" height="6.7" fill="#b8bac5"/></svg>
<div class="num" style="left:840px;top:562.7px">0</div>
<div class="num" style="left:970px;top:562.7px">0</div>
<div class="num" style="left:1449.5px;top:562.7px">20</div>
<div class="inp" style="left:1101px;top:554.3px;width:129px">0</div>
<div class="inp" style="left:1297px;top:554.3px;width:127px">0</div>
<svg class="cb" style="left:312px;top:616.9px" viewBox="0 0 18 18"><rect x="0.85" y="0.85" width="14.9" height="15.1" rx="3.7" fill="#fff" stroke="#8088ad" stroke-width="1.7"/></svg>
<svg class="abs" style="left:365px;top:600.0px" width="32.5" height="45.5" shape-rendering="crispEdges"><rect x="0.0" y="0.0" width="6.8" height="6.8" fill="#8b8890"/><rect x="6.5" y="0.0" width="6.8" height="6.8" fill="#6e6a74"/><rect x="13.0" y="0.0" width="6.8" height="6.8" fill="#5c5862"/><rect x="19.5" y="0.0" width="6.8" height="6.8" fill="#7a7680"/><rect x="26.0" y="0.0" width="6.8" height="6.8" fill="#a8a4a8"/><rect x="0.0" y="6.5" width="6.8" height="6.8" fill="#2e2830"/><rect x="6.5" y="6.5" width="6.8" height="6.8" fill="#1e1a22"/><rect x="13.0" y="6.5" width="6.8" height="6.8" fill="#2a2228"/><rect x="19.5" y="6.5" width="6.8" height="6.8" fill="#3a3036"/><rect x="26.0" y="6.5" width="6.8" height="6.8" fill="#8c8480"/><rect x="0.0" y="13.0" width="6.8" height="6.8" fill="#8c6a50"/><rect x="6.5" y="13.0" width="6.8" height="6.8" fill="#9a7656"/><rect x="13.0" y="13.0" width="6.8" height="6.8" fill="#7e6450"/><rect x="19.5" y="13.0" width="6.8" height="6.8" fill="#6a5a50"/><rect x="26.0" y="13.0" width="6.8" height="6.8" fill="#9c9488"/><rect x="0.0" y="19.5" width="6.8" height="6.8" fill="#b4622c"/><rect x="6.5" y="19.5" width="6.8" height="6.8" fill="#c66a24"/><rect x="13.0" y="19.5" width="6.8" height="6.8" fill="#a85a28"/><rect x="19.5" y="19.5" width="6.8" height="6.8" fill="#d88830"/><rect x="26.0" y="19.5" width="6.8" height="6.8" fill="#e8a860"/><rect x="0.0" y="26.0" width="6.8" height="6.8" fill="#6a4a30"/><rect x="6.5" y="26.0" width="6.8" height="6.8" fill="#3a3020"/><rect x="13.0" y="26.0" width="6.8" height="6.8" fill="#5a4428"/><rect x="19.5" y="26.0" width="6.8" height="6.8" fill="#c07028"/><rect x="26.0" y="26.0" width="6.8" height="6.8" fill="#e09848"/><rect x="0.0" y="32.5" width="6.8" height="6.8" fill="#3c3428"/><rect x="6.5" y="32.5" width="6.8" height="6.8" fill="#28241c"/><rect x="13.0" y="32.5" width="6.8" height="6.8" fill="#4a3c28"/><rect x="19.5" y="32.5" width="6.8" height="6.8" fill="#a86a30"/><rect x="26.0" y="32.5" width="6.8" height="6.8" fill="#d8a878"/><rect x="0.0" y="39.0" width="6.8" height="6.8" fill="#2c2424"/><rect x="6.5" y="39.0" width="6.8" height="6.8" fill="#3a3030"/><rect x="13.0" y="39.0" width="6.8" height="6.8" fill="#6a5c54"/><rect x="19.5" y="39.0" width="6.8" height="6.8" fill="#9c8c80"/><rect x="26.0" y="39.0" width="6.8" height="6.8" fill="#c8bcb0"/></svg>
<svg class="abs" style="left:410.5px;top:598.0px" width="131.0" height="42.1" shape-rendering="crispEdges"><rect x="0.0" y="8.6" width="6.7" height="6.7" fill="#f1f1f3"/><rect x="6.5" y="8.6" width="6.7" height="6.7" fill="#f1f1f3"/><rect x="13.0" y="8.6" width="6.7" height="6.7" fill="#f1f1f3"/><rect x="52.0" y="8.6" width="6.7" height="6.7" fill="#d5d6dc"/><rect x="104.0" y="8.6" width="6.7" height="6.7" fill="#f1f1f3"/><rect x="0.0" y="15.1" width="6.7" height="6.7" fill="#e3e3e8"/><rect x="6.5" y="15.1" width="6.7" height="6.7" fill="#c7c8d0"/><rect x="13.0" y="15.1" width="6.7" height="6.7" fill="#c7c8d0"/><rect x="19.5" y="15.1" width="6.7" height="6.7" fill="#b8bac5"/><rect x="26.0" y="15.1" width="6.7" height="6.7" fill="#c7c8d0"/><rect x="32.5" y="15.1" width="6.7" height="6.7" fill="#b8bac5"/><rect x="39.0" y="15.1" width="6.7" height="6.7" fill="#b8bac5"/><rect x="45.5" y="15.1" width="6.7" height="6.7" fill="#f1f1f3"/><rect x="52.0" y="15.1" width="6.7" height="6.7" fill="#d5d6dc"/><rect x="58.5" y="15.1" width="6.7" height="6.7" fill="#b8bac5"/><rect x="65.0" y="15.1" width="6.7" height="6.7" fill="#aaacb9"/><rect x="71.5" y="15.1" width="6.7" height="6.7" fill="#c7c8d0"/><rect x="78.0" y="15.1" width="6.7" height="6.7" fill="#b8bac5"/><rect x="84.5" y="15.1" width="6.7" height="6.7" fill="#b8bac5"/><rect x="91.0" y="15.1" width="6.7" height="6.7" fill="#aaacb9"/><rect x="104.0" y="15.1" width="6.7" height="6.7" fill="#e3e3e8"/><rect x="110.5" y="15.1" width="6.7" height="6.7" fill="#b8bac5"/><rect x="117.0" y="15.1" width="6.7" height="6.7" fill="#aaacb9"/><rect x="123.5" y="15.1" width="6.7" height="6.7" fill="#b8bac5"/><rect x="0.0" y="21.6" width="6.7" height="6.7" fill="#f1f1f3"/><rect x="6.5" y="21.6" width="6.7" height="6.7" fill="#f1f1f3"/><rect x="13.0" y="21.6" width="6.7" height="6.7" fill="#e3e3e8"/><rect x="19.5" y="21.6" width="6.7" height="6.7" fill="#e3e3e8"/><rect x="26.0" y="21.6" width="6.7" height="6.7" fill="#e3e3e8"/><rect x="32.5" y="21.6" width="6.7" height="6.7" fill="#d5d6dc"/><rect x="39.0" y="21.6" width="6.7" height="6.7" fill="#d5d6dc"/><rect x="52.0" y="21.6" width="6.7" height="6.7" fill="#d5d6dc"/><rect x="58.5" y="21.6" width="6.7" height="6.7" fill="#e3e3e8"/><rect x="65.0" y="21.6" width="6.7" height="6.7" fill="#e3e3e8"/><rect x="71.5" y="21.6" width="6.7" height="6.7" fill="#e3e3e8"/><rect x="78.0" y="21.6" width="6.7" height="6.7" fill="#e3e3e8"/><rect x="84.5" y="21.6" width="6.7" height="6.7" fill="#b8bac5"/><rect x="91.0" y="21.6" width="6.7" height="6.7" fill="#d5d6dc"/><rect x="104.0" y="21.6" width="6.7" height="6.7" fill="#e3e3e8"/><rect x="110.5" y="21.6" width="6.7" height="6.7" fill="#d5d6dc"/><rect x="117.0" y="21.6" width="6.7" height="6.7" fill="#e3e3e8"/><rect x="123.5" y="21.6" width="6.7" height="6.7" fill="#f1f1f3"/><rect x="0.0" y="28.1" width="6.7" height="6.7" fill="#f1f1f3"/><rect x="6.5" y="28.1" width="6.7" height="6.7" fill="#f1f1f3"/><rect x="0.0" y="34.6" width="6.7" height="6.7" fill="#e3e3e8"/><rect x="6.5" y="34.6" width="6.7" height="6.7" fill="#d5d6dc"/></svg>
<div class="num" style="left:840px;top:616.1px">0</div>
<div class="num" style="left:970px;top:616.1px">0</div>
<div class="num" style="left:1449.5px;top:616.1px">15</div>
<div class="inp" style="left:1101px;top:607.7px;width:129px">0</div>
<div class="inp" style="left:1297px;top:607.7px;width:127px">0</div>
<svg class="cb" style="left:312px;top:670.3px" viewBox="0 0 18 18"><rect x="0.85" y="0.85" width="14.9" height="15.1" rx="3.7" fill="#fff" stroke="#8088ad" stroke-width="1.7"/></svg>
<svg class="abs" style="left:365px;top:658.8px" width="32.5" height="45.5" shape-rendering="crispEdges"><rect x="0.0" y="0.0" width="6.8" height="6.8" fill="#f6f5f8"/><rect x="6.5" y="0.0" width="6.8" height="6.8" fill="#f3f2f5"/><rect x="13.0" y="0.0" width="6.8" height="6.8" fill="#f2f1f3"/><rect x="19.5" y="0.0" width="6.8" height="6.8" fill="#f3f2f4"/><rect x="26.0" y="0.0" width="6.8" height="6.8" fill="#f6f5f8"/><rect x="0.0" y="6.5" width="6.8" height="6.8" fill="#f1f0f3"/><rect x="6.5" y="6.5" width="6.8" height="6.8" fill="#ecebec"/><rect x="13.0" y="6.5" width="6.8" height="6.8" fill="#e9e8e6"/><rect x="19.5" y="6.5" width="6.8" height="6.8" fill="#ecebea"/><rect x="26.0" y="6.5" width="6.8" height="6.8" fill="#f1f0f2"/><rect x="0.0" y="13.0" width="6.8" height="6.8" fill="#efeef0"/><rect x="6.5" y="13.0" width="6.8" height="6.8" fill="#e8e7e4"/><rect x="13.0" y="13.0" width="6.8" height="6.8" fill="#e6e5dc"/><rect x="19.5" y="13.0" width="6.8" height="6.8" fill="#e9e8e2"/><rect x="26.0" y="13.0" width="6.8" height="6.8" fill="#eeedee"/><rect x="0.0" y="19.5" width="6.8" height="6.8" fill="#eeedee"/><rect x="6.5" y="19.5" width="6.8" height="6.8" fill="#e6e2cc"/><rect x="13.0" y="19.5" width="6.8" height="6.8" fill="#eee488"/><rect x="19.5" y="19.5" width="6.8" height="6.8" fill="#e6e0b8"/><rect x="26.0" y="19.5" width="6.8" height="6.8" fill="#edecea"/><rect x="0.0" y="26.0" width="6.8" height="6.8" fill="#c89a70"/><rect x="6.5" y="26.0" width="6.8" height="6.8" fill="#c8a880"/><rect x="13.0" y="26.0" width="6.8" height="6.8" fill="#c0b890"/><rect x="19.5" y="26.0" width="6.8" height="6.8" fill="#d8d4c4"/><rect x="26.0" y="26.0" width="6.8" height="6.8" fill="#e8e6e2"/><rect x="0.0" y="32.5" width="6.8" height="6.8" fill="#f2efec"/><rect x="6.5" y="32.5" width="6.8" height="6.8" fill="#efece8"/><rect x="13.0" y="32.5" width="6.8" height="6.8" fill="#eeebe6"/><rect x="19.5" y="32.5" width="6.8" height="6.8" fill="#efedea"/><rect x="26.0" y="32.5" width="6.8" height="6.8" fill="#f2f0ee"/><rect x="0.0" y="39.0" width="6.8" height="6.8" fill="#f7f6f6"/><rect x="6.5" y="39.0" width="6.8" height="6.8" fill="#f5f4f4"/><rect x="13.0" y="39.0" width="6.8" height="6.8" fill="#f5f4f3"/><rect x="19.5" y="39.0" width="6.8" height="6.8" fill="#f5f4f4"/><rect x="26.0" y="39.0" width="6.8" height="6.8" fill="#f7f6f6"/></svg>
<svg class="abs" style="left:410.5px;top:651.4px" width="79.0" height="48.4" shape-rendering="crispEdges"><rect x="6.5" y="7.7" width="6.7" height="6.7" fill="#f1f1f3"/><rect x="58.5" y="7.7" width="6.7" height="6.7" fill="#f1f1f3"/><rect x="0.0" y="14.2" width="6.7" height="6.7" fill="#e3e3e8"/><rect x="6.5" y="14.2" width="6.7" height="6.7" fill="#b8bac5"/><rect x="13.0" y="14.2" width="6.7" height="6.7" fill="#b8bac5"/><rect x="19.5" y="14.2" width="6.7" height="6.7" fill="#b8bac5"/><rect x="26.0" y="14.2" width="6.7" height="6.7" fill="#aaacb9"/><rect x="32.5" y="14.2" width="6.7" height="6.7" fill="#b8bac5"/><rect x="45.5" y="14.2" width="6.7" height="6.7" fill="#d5d6dc"/><rect x="52.0" y="14.2" width="6.7" height="6.7" fill="#c7c8d0"/><rect x="58.5" y="14.2" width="6.7" height="6.7" fill="#c7c8d0"/><rect x="65.0" y="14.2" width="6.7" height="6.7" fill="#e3e3e8"/><rect x="71.5" y="14.2" width="6.7" height="6.7" fill="#aaacb9"/><rect x="6.5" y="20.7" width="6.7" height="6.7" fill="#d5d6dc"/><rect x="13.0" y="20.7" width="6.7" height="6.7" fill="#d5d6dc"/><rect x="19.5" y="20.7" width="6.7" height="6.7" fill="#d5d6dc"/><rect x="26.0" y="20.7" width="6.7" height="6.7" fill="#e3e3e8"/><rect x="32.5" y="20.7" width="6.7" height="6.7" fill="#e3e3e8"/><rect x="39.0" y="20.7" width="6.7" height="6.7" fill="#f1f1f3"/><rect x="45.5" y="20.7" width="6.7" height="6.7" fill="#e3e3e8"/><rect x="52.0" y="20.7" width="6.7" height="6.7" fill="#d5d6dc"/><rect x="58.5" y="20.7" width="6.7" height="6.7" fill="#d5d6dc"/><rect x="65.0" y="20.7" width="6.7" height="6.7" fill="#e3e3e8"/><rect x="71.5" y="20.7" width="6.7" height="6.7" fill="#e3e3e8"/><rect x="0.0" y="27.9" width="6.7" height="6.7" fill="#f1f1f3"/><rect x="6.5" y="27.9" width="6.7" height="6.7" fill="#f1f1f3"/><rect x="0.0" y="34.4" width="6.7" height="6.7" fill="#e3e3e8"/><rect x="6.5" y="34.4" width="6.7" height="6.7" fill="#e3e3e8"/><rect x="0.0" y="40.9" width="6.7" height="6.7" fill="#f1f1f3"/><rect x="6.5" y="40.9" width="6.7" height="6.7" fill="#e3e3e8"/></svg>
<div class="num" style="left:840px;top:669.5px">0</div>
<div class="num" style="left:970px;top:669.5px">2</div>
<div class="num" style="left:1449.5px;top:669.5px">5</div>
<div class="inp" style="left:1101px;top:661.1px;width:129px">0</div>
<div class="inp" style="left:1297px;top:661.1px;width:127px">2</div>
<svg class="cb" style="left:312px;top:723.7px" viewBox="0 0 18 18"><rect x="0.85" y="0.85" width="14.9" height="15.1" rx="3.7" fill="#fff" stroke="#8088ad" stroke-width="1.7"/></svg>
<svg class="abs" style="left:365px;top:711.0px" width="32.5" height="45.5" shape-rendering="crispEdges"><rect x="0.0" y="0.0" width="6.8" height="6.8" fill="#ffffff"/><rect x="6.5" y="0.0" width="6.8" height="6.8" fill="#d8dade"/><rect x="13.0" y="0.0" width="6.8" height="6.8" fill="#c8cbd2"/><rect x="19.5" y="0.0" width="6.8" height="6.8" fill="#e8e9ec"/><rect x="26.0" y="0.0" width="6.8" height="6.8" fill="#ffffff"/><rect x="0.0" y="6.5" width="6.8" height="6.8" fill="#e8e9ed"/><rect x="6.5" y="6.5" width="6.8" height="6.8" fill="#2c3044"/><rect x="13.0" y="6.5" width="6.8" height="6.8" fill="#262a3e"/><rect x="19.5" y="6.5" width="6.8" height="6.8" fill="#2e3246"/><rect x="26.0" y="6.5" width="6.8" height="6.8" fill="#dcdee4"/><rect x="0.0" y="13.0" width="6.8" height="6.8" fill="#8c90a0"/><rect x="6.5" y="13.0" width="6.8" height="6.8" fill="#23273a"/><rect x="13.0" y="13.0" width="6.8" height="6.8" fill="#20243a"/><rect x="19.5" y="13.0" width="6.8" height="6.8" fill="#262a3e"/><rect x="26.0" y="13.0" width="6.8" height="6.8" fill="#8088a0"/><rect x="0.0" y="19.5" width="6.8" height="6.8" fill="#f4f4f6"/><rect x="6.5" y="19.5" width="6.8" height="6.8" fill="#262a3e"/><rect x="13.0" y="19.5" width="6.8" height="6.8" fill="#20243a"/><rect x="19.5" y="19.5" width="6.8" height="6.8" fill="#2a2e42"/><rect x="26.0" y="19.5" width="6.8" height="6.8" fill="#eceef2"/><rect x="0.0" y="26.0" width="6.8" height="6.8" fill="#f6f6f8"/><rect x="6.5" y="26.0" width="6.8" height="6.8" fill="#282c40"/><rect x="13.0" y="26.0" width="6.8" height="6.8" fill="#22263a"/><rect x="19.5" y="26.0" width="6.8" height="6.8" fill="#2c3044"/><rect x="26.0" y="26.0" width="6.8" height="6.8" fill="#eef0f4"/><rect x="0.0" y="32.5" width="6.8" height="6.8" fill="#f4f4f6"/><rect x="6.5" y="32.5" width="6.8" height="6.8" fill="#5a6074"/><rect x="13.0" y="32.5" width="6.8" height="6.8" fill="#4a5064"/><rect x="19.5" y="32.5" width="6.8" height="6.8" fill="#606678"/><rect x="26.0" y="32.5" width="6.8" height="6.8" fill="#eceef0"/><rect x="0.0" y="39.0" width="6.8" height="6.8" fill="#ffffff"/><rect x="6.5" y="39.0" width="6.8" height="6.8" fill="#f6f6f8"/><rect x="13.0" y="39.0" width="6.8" height="6.8" fill="#f2f2f6"/><rect x="19.5" y="39.0" width="6.8" height="6.8" fill="#f6f6f8"/><rect x="26.0" y="39.0" width="6.8" height="6.8" fill="#ffffff"/></svg>
<svg class="abs" style="left:410.5px;top:704.8px" width="53.0" height="46.5" shape-rendering="crispEdges"><rect x="0.0" y="13.0" width="6.7" height="6.7" fill="#f1f1f3"/><rect x="6.5" y="13.0" width="6.7" height="6.7" fill="#c7c8d0"/><rect x="19.5" y="13.0" width="6.7" height="6.7" fill="#d5d6dc"/><rect x="26.0" y="13.0" width="6.7" height="6.7" fill="#c7c8d0"/><rect x="32.5" y="13.0" width="6.7" height="6.7" fill="#d5d6dc"/><rect x="39.0" y="13.0" width="6.7" height="6.7" fill="#c7c8d0"/><rect x="45.5" y="13.0" width="6.7" height="6.7" fill="#f1f1f3"/><rect x="6.5" y="19.5" width="6.7" height="6.7" fill="#e3e3e8"/><rect x="13.0" y="19.5" width="6.7" height="6.7" fill="#e3e3e8"/><rect x="19.5" y="19.5" width="6.7" height="6.7" fill="#c7c8d0"/><rect x="26.0" y="19.5" width="6.7" height="6.7" fill="#d5d6dc"/><rect x="32.5" y="19.5" width="6.7" height="6.7" fill="#d5d6dc"/><rect x="39.0" y="19.5" width="6.7" height="6.7" fill="#e3e3e8"/><rect x="45.5" y="19.5" width="6.7" height="6.7" fill="#f1f1f3"/><rect x="0.0" y="26.0" width="6.7" height="6.7" fill="#f1f1f3"/><rect x="6.5" y="26.0" width="6.7" height="6.7" fill="#f1f1f3"/><rect x="13.0" y="26.0" width="6.7" height="6.7" fill="#f1f1f3"/><rect x="0.0" y="32.5" width="6.7" height="6.7" fill="#e3e3e8"/><rect x="6.5" y="32.5" width="6.7" height="6.7" fill="#aaacb9"/><rect x="13.0" y="32.5" width="6.7" height="6.7" fill="#b8bac5"/><rect x="19.5" y="32.5" width="6.7" height="6.7" fill="#b8bac5"/><rect x="26.0" y="32.5" width="6.7" height="6.7" fill="#c7c8d0"/><rect x="32.5" y="32.5" width="6.7" height="6.7" fill="#d5d6dc"/><rect x="0.0" y="39.0" width="6.7" height="6.7" fill="#f1f1f3"/><rect x="6.5" y="39.0" width="6.7" height="6.7" fill="#e3e3e8"/><rect x="13.0" y="39.0" width="6.7" height="6.7" fill="#e3e3e8"/><rect x="19.5" y="39.0" width="6.7" height="6.7" fill="#e3e3e8"/><rect x="26.0" y="39.0" width="6.7" height="6.7" fill="#e3e3e8"/><rect x="32.5" y="39.0" width="6.7" height="6.7" fill="#d5d6dc"/></svg>
<div class="num" style="left:840px;top:722.9px">0</div>
<div class="num" style="left:970px;top:722.9px">0</div>
<div class="num" style="left:1449.5px;top:722.9px">0</div>
<div class="inp" style="left:1101px;top:714.5px;width:129px">3</div>
<div class="inp" style="left:1297px;top:714.5px;width:127px">3</div>
<svg class="cb" style="left:312px;top:777.1px" viewBox="0 0 18 18"><rect x="0.85" y="0.85" width="14.9" height="15.1" rx="3.7" fill="#fff" stroke="#8088ad" stroke-width="1.7"/></svg>
<svg class="abs" style="left:365px;top:763.3000000000001px" width="32.5" height="45.5" shape-rendering="crispEdges"><rect x="0.0" y="0.0" width="6.8" height="6.8" fill="#f8f4ee"/><rect x="6.5" y="0.0" width="6.8" height="6.8" fill="#f6eedd"/><rect x="13.0" y="0.0" width="6.8" height="6.8" fill="#f5efe3"/><rect x="19.5" y="0.0" width="6.8" height="6.8" fill="#f3ecdc"/><rect x="26.0" y="0.0" width="6.8" height="6.8" fill="#f7f3ee"/><rect x="0.0" y="6.5" width="6.8" height="6.8" fill="#f7f2ea"/><rect x="6.5" y="6.5" width="6.8" height="6.8" fill="#f1d383"/><rect x="13.0" y="6.5" width="6.8" height="6.8" fill="#e3ab40"/><rect x="19.5" y="6.5" width="6.8" height="6.8" fill="#ecdcb8"/><rect x="26.0" y="6.5" width="6.8" height="6.8" fill="#f5f0e8"/><rect x="0.0" y="13.0" width="6.8" height="6.8" fill="#f6f0e6"/><rect x="6.5" y="13.0" width="6.8" height="6.8" fill="#efcb70"/><rect x="13.0" y="13.0" width="6.8" height="6.8" fill="#e2a93c"/><rect x="19.5" y="13.0" width="6.8" height="6.8" fill="#e8d4a8"/><rect x="26.0" y="13.0" width="6.8" height="6.8" fill="#f4eee4"/><rect x="0.0" y="19.5" width="6.8" height="6.8" fill="#f5eee2"/><rect x="6.5" y="19.5" width="6.8" height="6.8" fill="#ecc468"/><rect x="13.0" y="19.5" width="6.8" height="6.8" fill="#e1a638"/><rect x="19.5" y="19.5" width="6.8" height="6.8" fill="#e6cc98"/><rect x="26.0" y="19.5" width="6.8" height="6.8" fill="#f3ece0"/><rect x="0.0" y="26.0" width="6.8" height="6.8" fill="#f3e8d0"/><rect x="6.5" y="26.0" width="6.8" height="6.8" fill="#e3a83a"/><rect x="13.0" y="26.0" width="6.8" height="6.8" fill="#dfa234"/><rect x="19.5" y="26.0" width="6.8" height="6.8" fill="#dcae5c"/><rect x="26.0" y="26.0" width="6.8" height="6.8" fill="#efe4d0"/><rect x="0.0" y="32.5" width="6.8" height="6.8" fill="#eddcb8"/><rect x="6.5" y="32.5" width="6.8" height="6.8" fill="#dba040"/><rect x="13.0" y="32.5" width="6.8" height="6.8" fill="#d89c3c"/><rect x="19.5" y="32.5" width="6.8" height="6.8" fill="#d29c4c"/><rect x="26.0" y="32.5" width="6.8" height="6.8" fill="#e9dcc6"/><rect x="0.0" y="39.0" width="6.8" height="6.8" fill="#f6f2ec"/><rect x="6.5" y="39.0" width="6.8" height="6.8" fill="#f3ece0"/><rect x="13.0" y="39.0" width="6.8" height="6.8" fill="#f2eadc"/><rect x="19.5" y="39.0" width="6.8" height="6.8" fill="#f2ebe0"/><rect x="26.0" y="39.0" width="6.8" height="6.8" fill="#f6f3ee"/></svg>
<svg class="abs" style="left:410.5px;top:758.2px" width="124.5" height="45.4" shape-rendering="crispEdges"><rect x="0.0" y="11.8" width="6.7" height="6.7" fill="#e3e3e8"/><rect x="6.5" y="11.8" width="6.7" height="6.7" fill="#c7c8d0"/><rect x="13.0" y="11.8" width="6.7" height="6.7" fill="#e3e3e8"/><rect x="19.5" y="11.8" width="6.7" height="6.7" fill="#e3e3e8"/><rect x="26.0" y="11.8" width="6.7" height="6.7" fill="#e3e3e8"/><rect x="32.5" y="11.8" width="6.7" height="6.7" fill="#e3e3e8"/><rect x="39.0" y="11.8" width="6.7" height="6.7" fill="#e3e3e8"/><rect x="45.5" y="11.8" width="6.7" height="6.7" fill="#f1f1f3"/><rect x="52.0" y="11.8" width="6.7" height="6.7" fill="#c7c8d0"/><rect x="58.5" y="11.8" width="6.7" height="6.7" fill="#e3e3e8"/><rect x="65.0" y="11.8" width="6.7" height="6.7" fill="#e3e3e8"/><rect x="71.5" y="11.8" width="6.7" height="6.7" fill="#e3e3e8"/><rect x="78.0" y="11.8" width="6.7" height="6.7" fill="#e3e3e8"/><rect x="84.5" y="11.8" width="6.7" height="6.7" fill="#d5d6dc"/><rect x="91.0" y="11.8" width="6.7" height="6.7" fill="#e3e3e8"/><rect x="97.5" y="11.8" width="6.7" height="6.7" fill="#d5d6dc"/><rect x="104.0" y="11.8" width="6.7" height="6.7" fill="#e3e3e8"/><rect x="110.5" y="11.8" width="6.7" height="6.7" fill="#d5d6dc"/><rect x="117.0" y="11.8" width="6.7" height="6.7" fill="#e3e3e8"/><rect x="0.0" y="18.3" width="6.7" height="6.7" fill="#e3e3e8"/><rect x="6.5" y="18.3" width="6.7" height="6.7" fill="#c7c8d0"/><rect x="13.0" y="18.3" width="6.7" height="6.7" fill="#d5d6dc"/><rect x="19.5" y="18.3" width="6.7" height="6.7" fill="#b8bac5"/><rect x="26.0" y="18.3" width="6.7" height="6.7" fill="#b8bac5"/><rect x="32.5" y="18.3" width="6.7" height="6.7" fill="#b8bac5"/><rect x="39.0" y="18.3" width="6.7" height="6.7" fill="#e3e3e8"/><rect x="45.5" y="18.3" width="6.7" height="6.7" fill="#e3e3e8"/><rect x="52.0" y="18.3" width="6.7" height="6.7" fill="#b8bac5"/><rect x="58.5" y="18.3" width="6.7" height="6.7" fill="#d5d6dc"/><rect x="65.0" y="18.3" width="6.7" height="6.7" fill="#e3e3e8"/><rect x="71.5" y="18.3" width="6.7" height="6.7" fill="#c7c8d0"/><rect x="78.0" y="18.3" width="6.7" height="6.7" fill="#aaacb9"/><rect x="84.5" y="18.3" width="6.7" height="6.7" fill="#aaacb9"/><rect x="91.0" y="18.3" width="6.7" height="6.7" fill="#c7c8d0"/><rect x="97.5" y="18.3" width="6.7" height="6.7" fill="#d5d6dc"/><rect x="104.0" y="18.3" width="6.7" height="6.7" fill="#d5d6dc"/><rect x="110.5" y="18.3" width="6.7" height="6.7" fill="#aaacb9"/><rect x="117.0" y="18.3" width="6.7" height="6.7" fill="#e3e3e8"/><rect x="0.0" y="31.4" width="6.7" height="6.7" fill="#e3e3e8"/><rect x="6.5" y="31.4" width="6.7" height="6.7" fill="#aaacb9"/><rect x="13.0" y="31.4" width="6.7" height="6.7" fill="#b8bac5"/><rect x="19.5" y="31.4" width="6.7" height="6.7" fill="#b8bac5"/><rect x="26.0" y="31.4" width="6.7" height="6.7" fill="#c7c8d0"/><rect x="39.0" y="31.4" width="6.7" height="6.7" fill="#f1f1f3"/><rect x="45.5" y="31.4" width="6.7" height="6.7" fill="#e3e3e8"/><rect x="0.0" y="37.9" width="6.7" height="6.7" fill="#f1f1f3"/><rect x="6.5" y="37.9" width="6.7" height="6.7" fill="#d5d6dc"/><rect x="13.0" y="37.9" width="6.7" height="6.7" fill="#d5d6dc"/><rect x="19.5" y="37.9" width="6.7" height="6.7" fill="#d5d6dc"/><rect x="26.0" y="37.9" width="6.7" height="6.7" fill="#e3e3e8"/><rect x="45.5" y="37.9" width="6.7" height="6.7" fill="#e3e3e8"/></svg>
<div class="num" style="left:840px;top:776.3px">0</div>
<div class="num" style="left:970px;top:776.3px">0</div>
<div class="num" style="left:1449.5px;top:776.3px">0</div>
<div class="inp" style="left:1101px;top:767.9px;width:129px">8</div>
<div class="inp" style="left:1297px;top:767.9px;width:127px">8</div>
<svg class="cb" style="left:312px;top:830.5px" viewBox="0 0 18 18"><rect x="0.85" y="0.85" width="14.9" height="15.1" rx="3.7" fill="#fff" stroke="#8088ad" stroke-width="1.7"/></svg>
<svg class="abs" style="left:358.5px;top:822.4999999999999px" width="45.5" height="32.5" shape-rendering="crispEdges"><rect x="0.0" y="0.0" width="6.8" height="6.8" fill="#f4e8d0"/><rect x="6.5" y="0.0" width="6.8" height="6.8" fill="#f0dcb8"/><rect x="13.0" y="0.0" width="6.8" height="6.8" fill="#f6ecd8"/><rect x="19.5" y="0.0" width="6.8" height="6.8" fill="#f4e4c4"/><rect x="26.0" y="0.0" width="6.8" height="6.8" fill="#ecd4a8"/><rect x="32.5" y="0.0" width="6.8" height="6.8" fill="#f2e2c8"/><rect x="39.0" y="0.0" width="6.8" height="6.8" fill="#f8f0e4"/><rect x="0.0" y="6.5" width="6.8" height="6.8" fill="#e8c894"/><rect x="6.5" y="6.5" width="6.8" height="6.8" fill="#f2e4cc"/><rect x="13.0" y="6.5" width="6.8" height="6.8" fill="#f0d8b0"/><rect x="19.5" y="6.5" width="6.8" height="6.8" fill="#e8cc9c"/><rect x="26.0" y="6.5" width="6.8" height="6.8" fill="#c08c50"/><rect x="32.5" y="6.5" width="6.8" height="6.8" fill="#f0dcc0"/><rect x="39.0" y="6.5" width="6.8" height="6.8" fill="#f6ead8"/><rect x="0.0" y="13.0" width="6.8" height="6.8" fill="#d8a468"/><rect x="6.5" y="13.0" width="6.8" height="6.8" fill="#b07a44"/><rect x="13.0" y="13.0" width="6.8" height="6.8" fill="#c89058"/><rect x="19.5" y="13.0" width="6.8" height="6.8" fill="#f4e8d4"/><rect x="26.0" y="13.0" width="6.8" height="6.8" fill="#d8a870"/><rect x="32.5" y="13.0" width="6.8" height="6.8" fill="#f8e0c8"/><rect x="39.0" y="13.0" width="6.8" height="6.8" fill="#fad8c0"/><rect x="0.0" y="19.5" width="6.8" height="6.8" fill="#e8cca0"/><rect x="6.5" y="19.5" width="6.8" height="6.8" fill="#9c6a38"/><rect x="13.0" y="19.5" width="6.8" height="6.8" fill="#b88250"/><rect x="19.5" y="19.5" width="6.8" height="6.8" fill="#f0e0c4"/><rect x="26.0" y="19.5" width="6.8" height="6.8" fill="#f2e6d0"/><rect x="32.5" y="19.5" width="6.8" height="6.8" fill="#f0e4d0"/><rect x="39.0" y="19.5" width="6.8" height="6.8" fill="#f6eee2"/><rect x="0.0" y="26.0" width="6.8" height="6.8" fill="#e0dcd4"/><rect x="6.5" y="26.0" width="6.8" height="6.8" fill="#d0c8b8"/><rect x="13.0" y="26.0" width="6.8" height="6.8" fill="#d8d2c4"/><rect x="19.5" y="26.0" width="6.8" height="6.8" fill="#e4e0d6"/><rect x="26.0" y="26.0" width="6.8" height="6.8" fill="#e8e6e0"/><rect x="32.5" y="26.0" width="6.8" height="6.8" fill="#eceae4"/><rect x="39.0" y="26.0" width="6.8" height="6.8" fill="#f2f0ec"/></svg>
<svg class="abs" style="left:410.5px;top:811.5999999999999px" width="98.5" height="44.4" shape-rendering="crispEdges"><rect x="0.0" y="10.9" width="6.7" height="6.7" fill="#f1f1f3"/><rect x="6.5" y="10.9" width="6.7" height="6.7" fill="#d5d6dc"/><rect x="13.0" y="10.9" width="6.7" height="6.7" fill="#f1f1f3"/><rect x="19.5" y="10.9" width="6.7" height="6.7" fill="#f1f1f3"/><rect x="26.0" y="10.9" width="6.7" height="6.7" fill="#f1f1f3"/><rect x="32.5" y="10.9" width="6.7" height="6.7" fill="#e3e3e8"/><rect x="39.0" y="10.9" width="6.7" height="6.7" fill="#e3e3e8"/><rect x="45.5" y="10.9" width="6.7" height="6.7" fill="#f1f1f3"/><rect x="52.0" y="10.9" width="6.7" height="6.7" fill="#f1f1f3"/><rect x="65.0" y="10.9" width="6.7" height="6.7" fill="#c7c8d0"/><rect x="71.5" y="10.9" width="6.7" height="6.7" fill="#e3e3e8"/><rect x="78.0" y="10.9" width="6.7" height="6.7" fill="#e3e3e8"/><rect x="84.5" y="10.9" width="6.7" height="6.7" fill="#f1f1f3"/><rect x="91.0" y="10.9" width="6.7" height="6.7" fill="#f1f1f3"/><rect x="0.0" y="17.4" width="6.7" height="6.7" fill="#e3e3e8"/><rect x="6.5" y="17.4" width="6.7" height="6.7" fill="#d5d6dc"/><rect x="13.0" y="17.4" width="6.7" height="6.7" fill="#b8bac5"/><rect x="19.5" y="17.4" width="6.7" height="6.7" fill="#b8bac5"/><rect x="26.0" y="17.4" width="6.7" height="6.7" fill="#aaacb9"/><rect x="32.5" y="17.4" width="6.7" height="6.7" fill="#aaacb9"/><rect x="39.0" y="17.4" width="6.7" height="6.7" fill="#9c9fad"/><rect x="45.5" y="17.4" width="6.7" height="6.7" fill="#aaacb9"/><rect x="52.0" y="17.4" width="6.7" height="6.7" fill="#c7c8d0"/><rect x="58.5" y="17.4" width="6.7" height="6.7" fill="#c7c8d0"/><rect x="65.0" y="17.4" width="6.7" height="6.7" fill="#c7c8d0"/><rect x="71.5" y="17.4" width="6.7" height="6.7" fill="#b8bac5"/><rect x="78.0" y="17.4" width="6.7" height="6.7" fill="#aaacb9"/><rect x="84.5" y="17.4" width="6.7" height="6.7" fill="#aaacb9"/><rect x="91.0" y="17.4" width="6.7" height="6.7" fill="#9c9fad"/><rect x="32.5" y="23.9" width="6.7" height="6.7" fill="#f1f1f3"/><rect x="0.0" y="30.4" width="6.7" height="6.7" fill="#e3e3e8"/><rect x="6.5" y="30.4" width="6.7" height="6.7" fill="#c7c8d0"/><rect x="13.0" y="30.4" width="6.7" height="6.7" fill="#d5d6dc"/><rect x="19.5" y="30.4" width="6.7" height="6.7" fill="#aaacb9"/><rect x="26.0" y="30.4" width="6.7" height="6.7" fill="#c7c8d0"/><rect x="32.5" y="30.4" width="6.7" height="6.7" fill="#c7c8d0"/><rect x="39.0" y="30.4" width="6.7" height="6.7" fill="#d5d6dc"/><rect x="0.0" y="36.9" width="6.7" height="6.7" fill="#f1f1f3"/><rect x="6.5" y="36.9" width="6.7" height="6.7" fill="#d5d6dc"/><rect x="13.0" y="36.9" width="6.7" height="6.7" fill="#d5d6dc"/><rect x="19.5" y="36.9" width="6.7" height="6.7" fill="#c7c8d0"/><rect x="26.0" y="36.9" width="6.7" height="6.7" fill="#c7c8d0"/><rect x="32.5" y="36.9" width="6.7" height="6.7" fill="#c7c8d0"/><rect x="39.0" y="36.9" width="6.7" height="6.7" fill="#d5d6dc"/></svg>
<div class="num" style="left:840px;top:829.7px">0</div>
<div class="num" style="left:970px;top:829.7px">0</div>
<div class="num" style="left:1449.5px;top:829.7px">15</div>
<div class="inp" style="left:1101px;top:821.3px;width:129px">33</div>
<div class="inp" style="left:1297px;top:821.3px;width:127px">33</div>
<div class="abs" style="left:737px;top:288px;width:12px;height:578px;background:linear-gradient(90deg,rgba(30,30,50,0.13),rgba(30,30,50,0.065) 22%,rgba(30,30,50,0.025) 60%,rgba(30,30,50,0))"></div>
<svg class="abs" style="left:1254.6px;top:349.6px" width="15.6" height="15.6" viewBox="0 0 17 17" fill="none" stroke="#3a4262" stroke-width="1.3" stroke-linecap="round" stroke-linejoin="round"><path d="M12.6 4.4 V1.8 H1.8 V15.2 H6.6"/><circle cx="10.8" cy="10.8" r="2.6"/><path d="M12.8 12.8 L14.6 14.8"/></svg>
<div class="abs" style="left:600px;top:866px;width:967px;height:8px;border-radius:4px;background:#c0c0c0"></div>
<div class="abs" style="left:1108px;top:369px;width:32px;height:25px;border-radius:13px;background:#2f6ef2;box-shadow:0 3px 12px rgba(30,50,120,0.22)"></div>
<svg class="abs" style="left:1115px;top:372px" width="18" height="19" viewBox="0 0 18 19" fill="none" stroke="#fff" stroke-width="1.5" stroke-linejoin="round"><path d="M9 2 L15.4 8.2 H12 V11.6 H6 V8.2 H2.6 Z"/><rect x="6" y="14" width="6" height="2.6" rx="1.2"/></svg>
<div class="hl" style="left:1355px;top:64px;width:232px;height:71px"></div>
<div class="hl" style="left:1076px;top:288px;width:174px;height:582px"></div>
<svg class="abs" style="left:1260px;top:12px" width="86" height="86" viewBox="1260 12 86 86"><defs><clipPath id="one"><path d="M1280 30 H1309 V80 H1299.6 V69 H1280 Z"/></clipPath></defs><circle cx="1302.5" cy="54.3" r="37.5" fill="#386dfe"/><text x="1287.1" y="75.2" font-family="Liberation Sans, sans-serif" font-weight="bold" font-size="57" fill="#fff" clip-path="url(#one)">1</text></svg>
<svg class="abs" style="left:983px;top:223px" width="86" height="86" viewBox="983 223 86 86"><circle cx="1025.7" cy="265.3" r="37.6" fill="#386dfe"/><text x="1010.1" y="286.2" font-family="Liberation Sans, sans-serif" font-weight="bold" font-size="57" fill="#fff">2</text></svg>
<div class="abs" style="left:1522px;top:747px;width:52px;height:52px;border-radius:50%;background:#4f8ff0;box-shadow:0 2px 24px rgba(20,20,40,0.13)"></div>
<svg class="abs" style="left:1530px;top:755px" width="36" height="36" viewBox="1530 755 36 36"><path d="M1538.6 760 H1556.8 A2.7 2.7 0 0 1 1559.5 762.7 V786.4 L1552.6 783.8 H1538.6 A2.7 2.7 0 0 1 1535.9 781.1 V762.7 A2.7 2.7 0 0 1 1538.6 760 Z" fill="#fff"/><path d="M1540 776.8 C1543.6 780.6 1552 780.6 1555.6 776.8" fill="none" stroke="#4f8ff0" stroke-width="1.1" stroke-linecap="round"/></svg>
</body></html>
